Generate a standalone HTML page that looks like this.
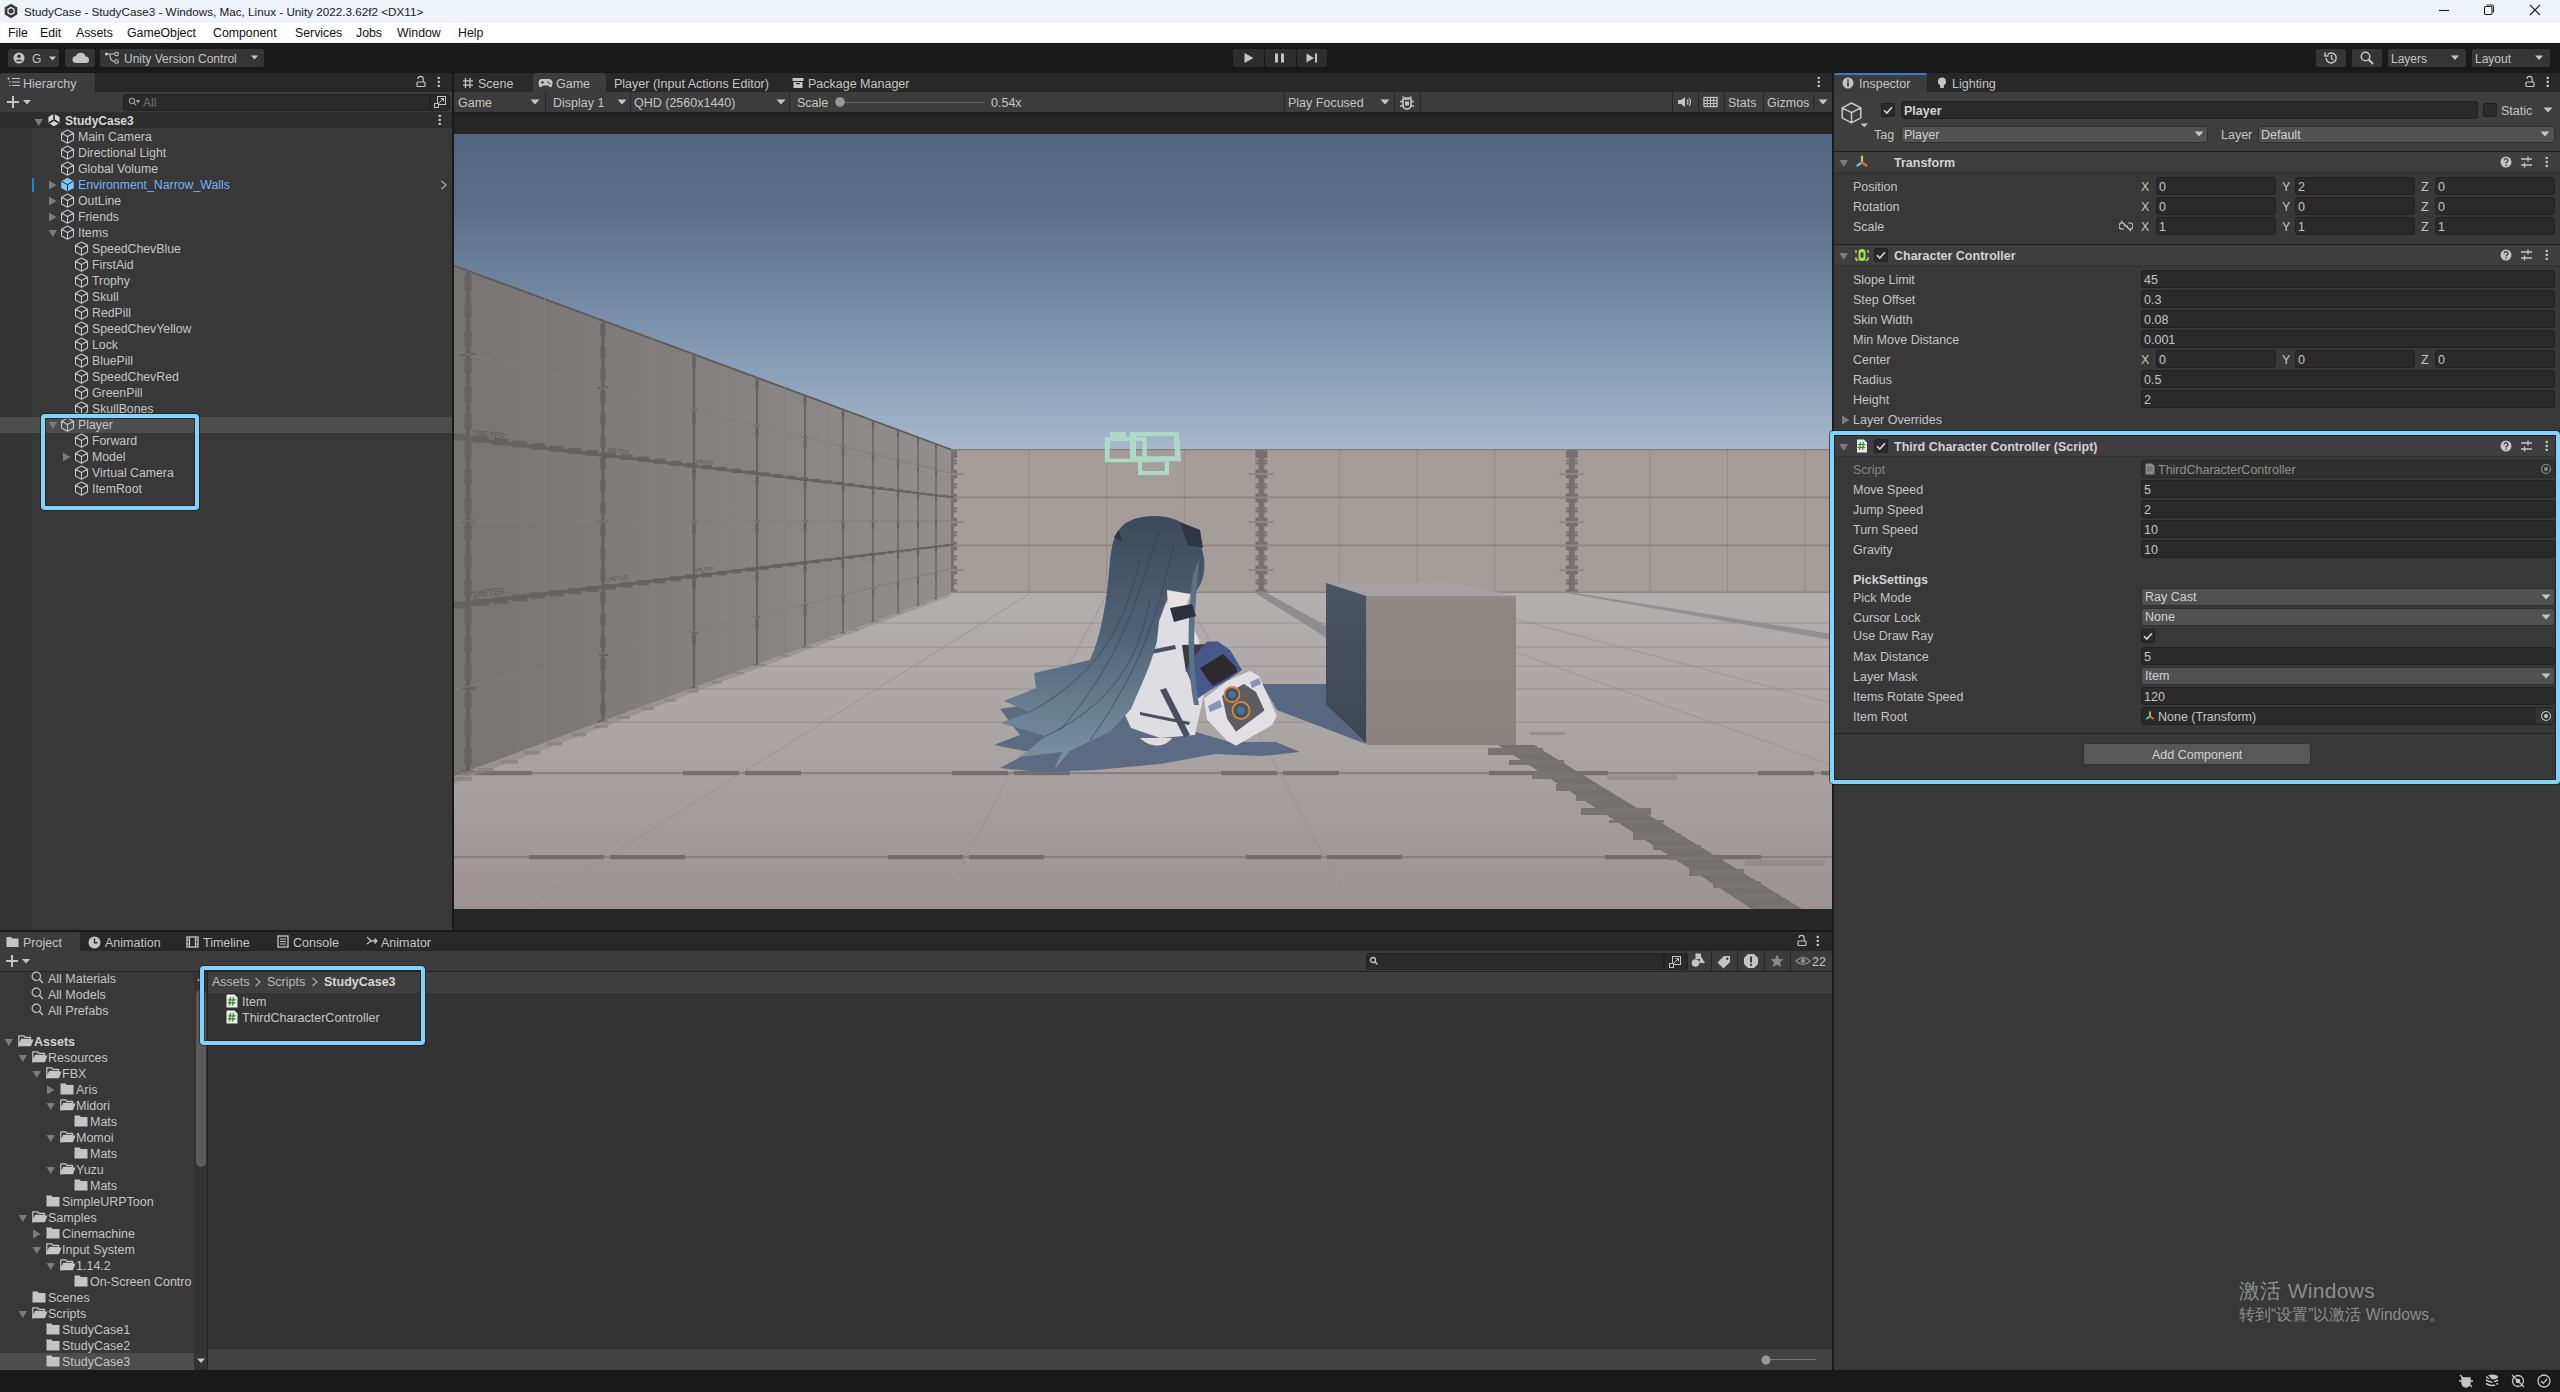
<!DOCTYPE html><html><head><meta charset="utf-8"><style>
*{margin:0;padding:0;box-sizing:border-box}
html,body{width:2560px;height:1392px;overflow:hidden;background:#191919;font-family:"Liberation Sans",sans-serif}
body>div,body>svg{position:absolute}
.t{position:absolute;line-height:16px;height:16px;white-space:nowrap;font-size:12px;color:#c4c4c4}
svg{position:absolute}
</style></head><body>
<div style="left:0px;top:0px;width:2560px;height:23px;background:#eef2f9;"></div>
<div style="left:0px;top:23px;width:2560px;height:20px;background:#ffffff;"></div>
<div style="left:0px;top:42px;width:2560px;height:1px;background:#f0f0f0;"></div>
<svg style="left:3px;top:3px" width="16" height="16" viewBox="0 0 16 16"><path d="M8 0.8 L14.3 4.4 L14.3 11.6 L8 15.2 L1.7 11.6 L1.7 4.4Z" fill="#3a3a3a"/><path d="M8 4.5 L11 6.2 L11 9.8 L8 11.5 L5 9.8 L5 6.2Z" fill="none" stroke="#eee" stroke-width="1.2"/></svg>
<div class="t" style="left:24px;top:4px;color:#1a1a1a;font-size:11.7px;">StudyCase - StudyCase3 - Windows, Mac, Linux - Unity 2022.3.62f2 &lt;DX11&gt;</div>
<svg style="left:2430px;top:2px" width="120" height="16" viewBox="0 0 120 16"><line x1="9" y1="8.5" x2="19" y2="8.5" stroke="#222" stroke-width="1.1"/><rect x="54.5" y="4.5" width="7.5" height="8" rx="1.2" fill="none" stroke="#222" stroke-width="1.1"/><path d="M56.5 3 h5 a2 2 0 0 1 2 2 v5.5" fill="none" stroke="#222" stroke-width="1.1"/><path d="M100 3 L110 13 M110 3 L100 13" stroke="#222" stroke-width="1.1"/></svg>
<div class="t" style="left:8px;top:25px;color:#111;font-size:12.3px;">File</div>
<div class="t" style="left:40px;top:25px;color:#111;font-size:12.3px;">Edit</div>
<div class="t" style="left:76px;top:25px;color:#111;font-size:12.3px;">Assets</div>
<div class="t" style="left:127px;top:25px;color:#111;font-size:12.3px;">GameObject</div>
<div class="t" style="left:213px;top:25px;color:#111;font-size:12.3px;">Component</div>
<div class="t" style="left:295px;top:25px;color:#111;font-size:12.3px;">Services</div>
<div class="t" style="left:356px;top:25px;color:#111;font-size:12.3px;">Jobs</div>
<div class="t" style="left:397px;top:25px;color:#111;font-size:12.3px;">Window</div>
<div class="t" style="left:458px;top:25px;color:#111;font-size:12.3px;">Help</div>
<div style="left:0px;top:43px;width:2560px;height:30px;background:#191919;"></div>
<div style="left:8px;top:49px;width:51px;height:18px;background:#353535;border-radius:2px"></div>
<div style="left:65px;top:49px;width:30px;height:18px;background:#353535;border-radius:2px"></div>
<div style="left:100px;top:49px;width:164px;height:18px;background:#353535;border-radius:2px"></div>
<svg style="left:12px;top:50px" width="46" height="16" viewBox="0 0 46 16"><circle cx="7" cy="8" r="5.5" fill="#c4c4c4"/><circle cx="7" cy="6.3" r="1.8" fill="#353535"/><path d="M3.6 11.2 a3.6 2.6 0 0 1 6.8 0" fill="#353535"/><path d="M37 6.5 h7 l-3.5 4z" fill="#c4c4c4"/></svg>
<div class="t" style="left:32px;top:51px;color:#c4c4c4;font-size:12px;">G</div>
<svg style="left:71px;top:51px" width="20" height="14" viewBox="0 0 20 14"><path d="M5 12 a3.5 3.5 0 0 1 0-7 a5 5 0 0 1 9.5 0.5 a3.2 3.2 0 0 1 0.5 6.5z" fill="#c4c4c4"/></svg>
<svg style="left:104px;top:50px" width="16" height="16" viewBox="0 0 16 16"><circle cx="2.5" cy="4" r="1.6" fill="#c4c4c4"/><circle cx="12.5" cy="4" r="1.8" fill="none" stroke="#c4c4c4" stroke-width="1.1"/><circle cx="12.5" cy="11.5" r="1.8" fill="none" stroke="#c4c4c4" stroke-width="1.1"/><path d="M2.5 4 H10.5 M6 4 Q6 11.5 10.5 11.5" fill="none" stroke="#c4c4c4" stroke-width="1.1"/></svg>
<div class="t" style="left:124px;top:51px;color:#c4c4c4;font-size:12px;">Unity Version Control</div>
<svg style="left:250px;top:54px" width="10" height="8"><path d="M1 1.5 h7 l-3.5 4z" fill="#c4c4c4"/></svg>
<div style="left:1233px;top:49px;width:31px;height:18px;background:#2d2d2d;border-radius:2px"></div>
<div style="left:1265px;top:49px;width:31px;height:18px;background:#2d2d2d;border-radius:2px"></div>
<div style="left:1297px;top:49px;width:30px;height:18px;background:#2d2d2d;border-radius:2px"></div>
<svg style="left:1233px;top:49px" width="95" height="18" viewBox="0 0 95 18"><path d="M11.5 4 L20.5 9 L11.5 14Z" fill="#c4c4c4"/><rect x="42" y="4.5" width="3" height="9" fill="#c4c4c4"/><rect x="48" y="4.5" width="3" height="9" fill="#c4c4c4"/><path d="M73.5 4.5 L81 9 L73.5 13.5Z" fill="#c4c4c4"/><rect x="82" y="4.5" width="2" height="9" fill="#c4c4c4"/></svg>
<div style="left:2316px;top:49px;width:30px;height:18px;background:#353535;border-radius:2px"></div>
<div style="left:2352px;top:49px;width:30px;height:18px;background:#353535;border-radius:2px"></div>
<div style="left:2388px;top:49px;width:78px;height:18px;background:#353535;border-radius:2px"></div>
<div style="left:2472px;top:49px;width:78px;height:18px;background:#353535;border-radius:2px"></div>
<svg style="left:2323px;top:50px" width="16" height="16" viewBox="0 0 16 16"><path d="M3.2 8 a5 5 0 1 0 1.5-3.6" fill="none" stroke="#c4c4c4" stroke-width="1.5"/><path d="M2 2.5 v3.5 h3.5" fill="none" stroke="#c4c4c4" stroke-width="1.5"/><path d="M8.5 5 v3.5 l2 1.5" fill="none" stroke="#c4c4c4" stroke-width="1.4"/></svg>
<svg style="left:2359px;top:50px" width="16" height="16" viewBox="0 0 16 16"><circle cx="6.5" cy="6.5" r="4.3" fill="none" stroke="#c4c4c4" stroke-width="1.5"/><path d="M9.8 9.8 L14 14" stroke="#c4c4c4" stroke-width="2"/></svg>
<div class="t" style="left:2391px;top:51px;color:#c4c4c4;font-size:12px;">Layers</div>
<div class="t" style="left:2475px;top:51px;color:#c4c4c4;font-size:12px;">Layout</div>
<svg style="left:2450px;top:54px" width="100" height="8"><path d="M1 1.5 h8 l-4 4.5z M85 1.5 h8 l-4 4.5z" fill="#c4c4c4"/></svg>
<div style="left:0px;top:73px;width:452px;height:19px;background:#282828;"></div>
<div style="left:0px;top:73px;width:95px;height:19px;background:#3c3c3c;border-radius:3px 3px 0 0"></div>
<svg style="left:7px;top:77px" width="14" height="12" viewBox="0 0 14 12"><path d="M0.5 1.5 h2 M1.5 0.5 v2 M5 1.5 H13 M5 5 H13 M5 8.5 H13 M2 5 h1.5 M2 8.5 h1.5" stroke="#c4c4c4" stroke-width="1.2"/></svg>
<div class="t" style="left:23px;top:76px;color:#c4c4c4;font-size:12.5px;">Hierarchy</div>
<svg style="left:415px;top:75px" width="12" height="13" viewBox="0 0 12 13"><rect x="2" y="7" width="8" height="4.5" rx="0.8" fill="none" stroke="#c4c4c4" stroke-width="1.2"/><path d="M8.2 7 V4 a2.6 2.6 0 0 0 -5.2 0" fill="none" stroke="#c4c4c4" stroke-width="1.2"/></svg>
<svg style="left:437px;top:76px" width="4" height="12"><rect x="0.6" y="0.8" width="2.3" height="2.3" rx="0.6" fill="#c4c4c4"/><rect x="0.6" y="4.8" width="2.3" height="2.3" rx="0.6" fill="#c4c4c4"/><rect x="0.6" y="8.8" width="2.3" height="2.3" rx="0.6" fill="#c4c4c4"/></svg>
<div style="left:0px;top:92px;width:452px;height:20px;background:#3c3c3c;"></div>
<svg style="left:6px;top:95px" width="30" height="14" viewBox="0 0 30 14"><path d="M7 1 V13 M1 7 H13" stroke="#c4c4c4" stroke-width="2"/><path d="M17 5 h8 l-4 4.5z" fill="#c4c4c4"/></svg>
<div style="left:123px;top:94px;width:307px;height:17px;background:#2a2a2a;border:1px solid #212121;border-radius:3px 0 0 3px"></div>
<svg style="left:128px;top:97px" width="12" height="10" viewBox="0 0 12 10"><circle cx="4" cy="4" r="2.6" fill="none" stroke="#9a9a9a" stroke-width="1.1"/><path d="M6 6 L8 8 M8.5 3.5 h3 l-1.5 2z" stroke="#9a9a9a" fill="#9a9a9a" stroke-width="1.1"/></svg>
<div class="t" style="left:143px;top:95px;color:#6f6f6f;font-size:12px;">All</div>
<div style="left:430px;top:94px;width:20px;height:17px;background:#2a2a2a;border:1px solid #212121;border-radius:0 3px 3px 0"></div>
<svg style="left:433px;top:95px" width="14" height="14" viewBox="0 0 14 14"><rect x="4.5" y="1.5" width="8" height="8" fill="none" stroke="#c4c4c4" stroke-width="1"/><rect x="1.5" y="8.5" width="4" height="4" fill="#2a2a2a" stroke="#c4c4c4" stroke-width="1"/><path d="M5.5 8.5 L10.5 3.5 M7.5 3.5 H10.5 V6.5" fill="none" stroke="#c4c4c4" stroke-width="1"/></svg>
<div style="left:0px;top:112px;width:452px;height:818px;background:#383838;"></div>
<div style="left:0px;top:128px;width:32px;height:802px;background:#333333;"></div>
<div style="left:0px;top:112px;width:452px;height:16px;background:#2d2d2d;"></div>
<svg style="left:34px;top:118px" width="10" height="9"><path d="M0.5 1 H9 L4.75 8z" fill="#7b7b7b"/></svg>
<svg style="left:47px;top:113px" width="14" height="14" viewBox="0 0 14 14"><path d="M7 0.8 L12.6 4 V10 L7 13.2 L1.4 10 V4Z" fill="#d8d8d8"/><path d="M7 0.8 V7 L1.6 10.2 M7 7 L12.4 10.2" stroke="#2d2d2d" stroke-width="1.7" fill="none"/><path d="M7 8.5 V13" stroke="#d8d8d8" stroke-width="1.6"/></svg>
<div class="t" style="left:65px;top:113px;color:#d6d6d6;font-size:12px;font-weight:bold">StudyCase3</div>
<svg style="left:438px;top:114px" width="4" height="12"><rect x="0.6" y="0.8" width="2.3" height="2.3" rx="0.6" fill="#c4c4c4"/><rect x="0.6" y="4.8" width="2.3" height="2.3" rx="0.6" fill="#c4c4c4"/><rect x="0.6" y="8.8" width="2.3" height="2.3" rx="0.6" fill="#c4c4c4"/></svg>
<div style="left:0px;top:417px;width:452px;height:16px;background:#4d4d4d;"></div>
<svg style="left:60px;top:129px" width="15" height="15" viewBox="0 0 15 15"><path d="M7.5 1 L13.5 4.3 L13.5 10.9 L7.5 14.2 L1.5 10.9 L1.5 4.3Z M1.5 4.3 L7.5 7.6 L13.5 4.3 M7.5 7.6 V14.2" fill="none" stroke="#c4c4c4" stroke-width="1.1" stroke-linejoin="round"/></svg>
<div class="t" style="left:78px;top:129px;color:#c4c4c4;font-size:12.3px;">Main Camera</div>
<svg style="left:60px;top:145px" width="15" height="15" viewBox="0 0 15 15"><path d="M7.5 1 L13.5 4.3 L13.5 10.9 L7.5 14.2 L1.5 10.9 L1.5 4.3Z M1.5 4.3 L7.5 7.6 L13.5 4.3 M7.5 7.6 V14.2" fill="none" stroke="#c4c4c4" stroke-width="1.1" stroke-linejoin="round"/></svg>
<div class="t" style="left:78px;top:145px;color:#c4c4c4;font-size:12.3px;">Directional Light</div>
<svg style="left:60px;top:161px" width="15" height="15" viewBox="0 0 15 15"><path d="M7.5 1 L13.5 4.3 L13.5 10.9 L7.5 14.2 L1.5 10.9 L1.5 4.3Z M1.5 4.3 L7.5 7.6 L13.5 4.3 M7.5 7.6 V14.2" fill="none" stroke="#c4c4c4" stroke-width="1.1" stroke-linejoin="round"/></svg>
<div class="t" style="left:78px;top:161px;color:#c4c4c4;font-size:12.3px;">Global Volume</div>
<svg style="left:48px;top:180px" width="9" height="10"><path d="M1 0.5 V9.5 L8.5 5z" fill="#7b7b7b"/></svg>
<svg style="left:60px;top:177px" width="15" height="15" viewBox="0 0 15 15"><path d="M7.5 0.8 L13.8 4.2 L13.8 11 L7.5 14.4 L1.2 11 L1.2 4.2Z" fill="#7cc7f5"/><path d="M1.5 4.3 L7.5 7.6 L13.5 4.3 M7.5 7.6 V14" fill="none" stroke="#2b2b2b" stroke-width="1"/></svg>
<div class="t" style="left:78px;top:177px;color:#7bb0f2;font-size:12.3px;">Environment_Narrow_Walls</div>
<svg style="left:48px;top:196px" width="9" height="10"><path d="M1 0.5 V9.5 L8.5 5z" fill="#7b7b7b"/></svg>
<svg style="left:60px;top:193px" width="15" height="15" viewBox="0 0 15 15"><path d="M7.5 1 L13.5 4.3 L13.5 10.9 L7.5 14.2 L1.5 10.9 L1.5 4.3Z M1.5 4.3 L7.5 7.6 L13.5 4.3 M7.5 7.6 V14.2" fill="none" stroke="#c4c4c4" stroke-width="1.1" stroke-linejoin="round"/></svg>
<div class="t" style="left:78px;top:193px;color:#c4c4c4;font-size:12.3px;">OutLine</div>
<svg style="left:48px;top:212px" width="9" height="10"><path d="M1 0.5 V9.5 L8.5 5z" fill="#7b7b7b"/></svg>
<svg style="left:60px;top:209px" width="15" height="15" viewBox="0 0 15 15"><path d="M7.5 1 L13.5 4.3 L13.5 10.9 L7.5 14.2 L1.5 10.9 L1.5 4.3Z M1.5 4.3 L7.5 7.6 L13.5 4.3 M7.5 7.6 V14.2" fill="none" stroke="#c4c4c4" stroke-width="1.1" stroke-linejoin="round"/></svg>
<div class="t" style="left:78px;top:209px;color:#c4c4c4;font-size:12.3px;">Friends</div>
<svg style="left:48px;top:229px" width="10" height="9"><path d="M0.5 1 H9 L4.75 8z" fill="#7b7b7b"/></svg>
<svg style="left:60px;top:225px" width="15" height="15" viewBox="0 0 15 15"><path d="M7.5 1 L13.5 4.3 L13.5 10.9 L7.5 14.2 L1.5 10.9 L1.5 4.3Z M1.5 4.3 L7.5 7.6 L13.5 4.3 M7.5 7.6 V14.2" fill="none" stroke="#c4c4c4" stroke-width="1.1" stroke-linejoin="round"/></svg>
<div class="t" style="left:78px;top:225px;color:#c4c4c4;font-size:12.3px;">Items</div>
<svg style="left:74px;top:241px" width="15" height="15" viewBox="0 0 15 15"><path d="M7.5 1 L13.5 4.3 L13.5 10.9 L7.5 14.2 L1.5 10.9 L1.5 4.3Z M1.5 4.3 L7.5 7.6 L13.5 4.3 M7.5 7.6 V14.2" fill="none" stroke="#c4c4c4" stroke-width="1.1" stroke-linejoin="round"/></svg>
<div class="t" style="left:92px;top:241px;color:#c4c4c4;font-size:12.3px;">SpeedChevBlue</div>
<svg style="left:74px;top:257px" width="15" height="15" viewBox="0 0 15 15"><path d="M7.5 1 L13.5 4.3 L13.5 10.9 L7.5 14.2 L1.5 10.9 L1.5 4.3Z M1.5 4.3 L7.5 7.6 L13.5 4.3 M7.5 7.6 V14.2" fill="none" stroke="#c4c4c4" stroke-width="1.1" stroke-linejoin="round"/></svg>
<div class="t" style="left:92px;top:257px;color:#c4c4c4;font-size:12.3px;">FirstAid</div>
<svg style="left:74px;top:273px" width="15" height="15" viewBox="0 0 15 15"><path d="M7.5 1 L13.5 4.3 L13.5 10.9 L7.5 14.2 L1.5 10.9 L1.5 4.3Z M1.5 4.3 L7.5 7.6 L13.5 4.3 M7.5 7.6 V14.2" fill="none" stroke="#c4c4c4" stroke-width="1.1" stroke-linejoin="round"/></svg>
<div class="t" style="left:92px;top:273px;color:#c4c4c4;font-size:12.3px;">Trophy</div>
<svg style="left:74px;top:289px" width="15" height="15" viewBox="0 0 15 15"><path d="M7.5 1 L13.5 4.3 L13.5 10.9 L7.5 14.2 L1.5 10.9 L1.5 4.3Z M1.5 4.3 L7.5 7.6 L13.5 4.3 M7.5 7.6 V14.2" fill="none" stroke="#c4c4c4" stroke-width="1.1" stroke-linejoin="round"/></svg>
<div class="t" style="left:92px;top:289px;color:#c4c4c4;font-size:12.3px;">Skull</div>
<svg style="left:74px;top:305px" width="15" height="15" viewBox="0 0 15 15"><path d="M7.5 1 L13.5 4.3 L13.5 10.9 L7.5 14.2 L1.5 10.9 L1.5 4.3Z M1.5 4.3 L7.5 7.6 L13.5 4.3 M7.5 7.6 V14.2" fill="none" stroke="#c4c4c4" stroke-width="1.1" stroke-linejoin="round"/></svg>
<div class="t" style="left:92px;top:305px;color:#c4c4c4;font-size:12.3px;">RedPill</div>
<svg style="left:74px;top:321px" width="15" height="15" viewBox="0 0 15 15"><path d="M7.5 1 L13.5 4.3 L13.5 10.9 L7.5 14.2 L1.5 10.9 L1.5 4.3Z M1.5 4.3 L7.5 7.6 L13.5 4.3 M7.5 7.6 V14.2" fill="none" stroke="#c4c4c4" stroke-width="1.1" stroke-linejoin="round"/></svg>
<div class="t" style="left:92px;top:321px;color:#c4c4c4;font-size:12.3px;">SpeedChevYellow</div>
<svg style="left:74px;top:337px" width="15" height="15" viewBox="0 0 15 15"><path d="M7.5 1 L13.5 4.3 L13.5 10.9 L7.5 14.2 L1.5 10.9 L1.5 4.3Z M1.5 4.3 L7.5 7.6 L13.5 4.3 M7.5 7.6 V14.2" fill="none" stroke="#c4c4c4" stroke-width="1.1" stroke-linejoin="round"/></svg>
<div class="t" style="left:92px;top:337px;color:#c4c4c4;font-size:12.3px;">Lock</div>
<svg style="left:74px;top:353px" width="15" height="15" viewBox="0 0 15 15"><path d="M7.5 1 L13.5 4.3 L13.5 10.9 L7.5 14.2 L1.5 10.9 L1.5 4.3Z M1.5 4.3 L7.5 7.6 L13.5 4.3 M7.5 7.6 V14.2" fill="none" stroke="#c4c4c4" stroke-width="1.1" stroke-linejoin="round"/></svg>
<div class="t" style="left:92px;top:353px;color:#c4c4c4;font-size:12.3px;">BluePill</div>
<svg style="left:74px;top:369px" width="15" height="15" viewBox="0 0 15 15"><path d="M7.5 1 L13.5 4.3 L13.5 10.9 L7.5 14.2 L1.5 10.9 L1.5 4.3Z M1.5 4.3 L7.5 7.6 L13.5 4.3 M7.5 7.6 V14.2" fill="none" stroke="#c4c4c4" stroke-width="1.1" stroke-linejoin="round"/></svg>
<div class="t" style="left:92px;top:369px;color:#c4c4c4;font-size:12.3px;">SpeedChevRed</div>
<svg style="left:74px;top:385px" width="15" height="15" viewBox="0 0 15 15"><path d="M7.5 1 L13.5 4.3 L13.5 10.9 L7.5 14.2 L1.5 10.9 L1.5 4.3Z M1.5 4.3 L7.5 7.6 L13.5 4.3 M7.5 7.6 V14.2" fill="none" stroke="#c4c4c4" stroke-width="1.1" stroke-linejoin="round"/></svg>
<div class="t" style="left:92px;top:385px;color:#c4c4c4;font-size:12.3px;">GreenPill</div>
<svg style="left:74px;top:401px" width="15" height="15" viewBox="0 0 15 15"><path d="M7.5 1 L13.5 4.3 L13.5 10.9 L7.5 14.2 L1.5 10.9 L1.5 4.3Z M1.5 4.3 L7.5 7.6 L13.5 4.3 M7.5 7.6 V14.2" fill="none" stroke="#c4c4c4" stroke-width="1.1" stroke-linejoin="round"/></svg>
<div class="t" style="left:92px;top:401px;color:#c4c4c4;font-size:12.3px;">SkullBones</div>
<svg style="left:48px;top:421px" width="10" height="9"><path d="M0.5 1 H9 L4.75 8z" fill="#7b7b7b"/></svg>
<svg style="left:60px;top:417px" width="15" height="15" viewBox="0 0 15 15"><path d="M7.5 1 L13.5 4.3 L13.5 10.9 L7.5 14.2 L1.5 10.9 L1.5 4.3Z M1.5 4.3 L7.5 7.6 L13.5 4.3 M7.5 7.6 V14.2" fill="none" stroke="#c4c4c4" stroke-width="1.1" stroke-linejoin="round"/></svg>
<div class="t" style="left:78px;top:417px;color:#c4c4c4;font-size:12.3px;">Player</div>
<svg style="left:74px;top:433px" width="15" height="15" viewBox="0 0 15 15"><path d="M7.5 1 L13.5 4.3 L13.5 10.9 L7.5 14.2 L1.5 10.9 L1.5 4.3Z M1.5 4.3 L7.5 7.6 L13.5 4.3 M7.5 7.6 V14.2" fill="none" stroke="#c4c4c4" stroke-width="1.1" stroke-linejoin="round"/></svg>
<div class="t" style="left:92px;top:433px;color:#c4c4c4;font-size:12.3px;">Forward</div>
<svg style="left:62px;top:452px" width="9" height="10"><path d="M1 0.5 V9.5 L8.5 5z" fill="#7b7b7b"/></svg>
<svg style="left:74px;top:449px" width="15" height="15" viewBox="0 0 15 15"><path d="M7.5 1 L13.5 4.3 L13.5 10.9 L7.5 14.2 L1.5 10.9 L1.5 4.3Z M1.5 4.3 L7.5 7.6 L13.5 4.3 M7.5 7.6 V14.2" fill="none" stroke="#c4c4c4" stroke-width="1.1" stroke-linejoin="round"/></svg>
<div class="t" style="left:92px;top:449px;color:#c4c4c4;font-size:12.3px;">Model</div>
<svg style="left:74px;top:465px" width="15" height="15" viewBox="0 0 15 15"><path d="M7.5 1 L13.5 4.3 L13.5 10.9 L7.5 14.2 L1.5 10.9 L1.5 4.3Z M1.5 4.3 L7.5 7.6 L13.5 4.3 M7.5 7.6 V14.2" fill="none" stroke="#c4c4c4" stroke-width="1.1" stroke-linejoin="round"/></svg>
<div class="t" style="left:92px;top:465px;color:#c4c4c4;font-size:12.3px;">Virtual Camera</div>
<svg style="left:74px;top:481px" width="15" height="15" viewBox="0 0 15 15"><path d="M7.5 1 L13.5 4.3 L13.5 10.9 L7.5 14.2 L1.5 10.9 L1.5 4.3Z M1.5 4.3 L7.5 7.6 L13.5 4.3 M7.5 7.6 V14.2" fill="none" stroke="#c4c4c4" stroke-width="1.1" stroke-linejoin="round"/></svg>
<div class="t" style="left:92px;top:481px;color:#c4c4c4;font-size:12.3px;">ItemRoot</div>
<div style="left:32px;top:178px;width:2px;height:14px;background:#0a8ad6;"></div>
<svg style="left:440px;top:180px" width="8" height="10"><path d="M1.5 1 L6 5 L1.5 9" fill="none" stroke="#a8a8a8" stroke-width="1.3"/></svg>
<div style="left:41px;top:414px;width:158px;height:96px;background:transparent;border:4px solid #80d4fa;border-radius:4px;box-shadow:0 0 0 1px rgba(40,30,25,0.7), inset 0 0 0 1px rgba(40,30,25,0.7)"></div>
<div style="left:454px;top:73px;width:1378px;height:19px;background:#282828;"></div>
<div style="left:454px;top:73px;width:79px;height:19px;background:#2a2a2a;border-radius:3px 3px 0 0"></div>
<div style="left:533px;top:73px;width:73px;height:19px;background:#3c3c3c;border-radius:3px 3px 0 0"></div>
<svg style="left:462px;top:77px" width="12" height="12" viewBox="0 0 12 12"><path d="M3.5 1 V11 M8 1 V11 M1 3.8 H11 M1 8.2 H11" stroke="#c4c4c4" stroke-width="1.3"/></svg>
<div class="t" style="left:478px;top:76px;color:#c4c4c4;font-size:12.5px;">Scene</div>
<svg style="left:538px;top:78px" width="15" height="10" viewBox="0 0 15 10"><path d="M4 1 H11 a3.5 3.5 0 0 1 3.5 4 L14 8 a1.5 1.5 0 0 1-2.5 0.8 L10 7.5 H5 L3.5 8.8 A1.5 1.5 0 0 1 1 8 L0.5 5 A3.5 3.5 0 0 1 4 1z" fill="#c4c4c4"/><path d="M3 4.5 h3 M4.5 3 v3" stroke="#3c3c3c" stroke-width="1"/><circle cx="10" cy="4" r="0.8" fill="#3c3c3c"/><circle cx="11.5" cy="5.5" r="0.8" fill="#3c3c3c"/></svg>
<div class="t" style="left:556px;top:76px;color:#c4c4c4;font-size:12.5px;">Game</div>
<div class="t" style="left:614px;top:76px;color:#c4c4c4;font-size:12.5px;">Player (Input Actions Editor)</div>
<svg style="left:792px;top:77px" width="12" height="12" viewBox="0 0 12 12"><rect x="0.5" y="1" width="11" height="3" fill="#c4c4c4"/><path d="M1.5 5 H10.5 V11 H1.5z" fill="#c4c4c4"/><rect x="4" y="6" width="4" height="1.2" fill="#282828"/></svg>
<div class="t" style="left:808px;top:76px;color:#c4c4c4;font-size:12.5px;">Package Manager</div>
<svg style="left:1817px;top:76px" width="4" height="12"><rect x="0.6" y="0.8" width="2.3" height="2.3" rx="0.6" fill="#c4c4c4"/><rect x="0.6" y="4.8" width="2.3" height="2.3" rx="0.6" fill="#c4c4c4"/><rect x="0.6" y="8.8" width="2.3" height="2.3" rx="0.6" fill="#c4c4c4"/></svg>
<div style="left:454px;top:92px;width:1378px;height:20px;background:#3c3c3c;"></div>
<div style="left:545px;top:92px;width:1px;height:20px;background:#262626;"></div>
<div style="left:630px;top:92px;width:1px;height:20px;background:#262626;"></div>
<div style="left:789px;top:92px;width:1px;height:20px;background:#262626;"></div>
<div style="left:1284px;top:92px;width:1px;height:20px;background:#262626;"></div>
<div style="left:1394px;top:92px;width:1px;height:20px;background:#262626;"></div>
<div style="left:1420px;top:92px;width:1px;height:20px;background:#262626;"></div>
<div style="left:1672px;top:92px;width:1px;height:20px;background:#262626;"></div>
<div style="left:1698px;top:92px;width:1px;height:20px;background:#262626;"></div>
<div style="left:1724px;top:92px;width:1px;height:20px;background:#262626;"></div>
<div style="left:1763px;top:92px;width:1px;height:20px;background:#262626;"></div>
<div class="t" style="left:458px;top:95px;color:#c4c4c4;font-size:12.5px;">Game</div>
<svg style="left:530px;top:99px" width="10" height="7"><path d="M0.5 0.5 H9.5 L5 5.5z" fill="#c4c4c4"/></svg>
<div class="t" style="left:553px;top:95px;color:#c4c4c4;font-size:12.5px;">Display 1</div>
<svg style="left:617px;top:99px" width="10" height="7"><path d="M0.5 0.5 H9.5 L5 5.5z" fill="#c4c4c4"/></svg>
<div class="t" style="left:634px;top:95px;color:#c4c4c4;font-size:12.5px;">QHD (2560x1440)</div>
<svg style="left:776px;top:99px" width="10" height="7"><path d="M0.5 0.5 H9.5 L5 5.5z" fill="#c4c4c4"/></svg>
<div class="t" style="left:797px;top:95px;color:#c4c4c4;font-size:12.5px;">Scale</div>
<div style="left:840px;top:102px;width:145px;height:1px;background:#666666;"></div>
<svg style="left:834px;top:96px" width="12" height="12"><circle cx="6" cy="6" r="4.8" fill="#999999"/></svg>
<div class="t" style="left:991px;top:95px;color:#c4c4c4;font-size:12.5px;">0.54x</div>
<div class="t" style="left:1288px;top:95px;color:#c4c4c4;font-size:12.5px;">Play Focused</div>
<svg style="left:1380px;top:99px" width="10" height="7"><path d="M0.5 0.5 H9.5 L5 5.5z" fill="#c4c4c4"/></svg>
<svg style="left:1399px;top:95px" width="16" height="15" viewBox="0 0 16 15"><path d="M5 3 L3.5 1 M11 3 L12.5 1" stroke="#c4c4c4" stroke-width="1.1"/><path d="M4 4 H12 V10 a4 4 0 0 1-8 0z" fill="none" stroke="#c4c4c4" stroke-width="1.6"/><rect x="6" y="6.5" width="4" height="4" fill="#c4c4c4"/><path d="M1 6.5 H4 M12 6.5 H15 M1 11 H4 M12 11 H15 M5 3 H11" stroke="#c4c4c4" stroke-width="1.3"/></svg>
<svg style="left:1677px;top:96px" width="16" height="12" viewBox="0 0 16 12"><path d="M1 4 H4 L8 1 V11 L4 8 H1z" fill="#c4c4c4"/><path d="M10 3.5 Q12 6 10 8.5 M12 2 Q15 6 12 10" fill="none" stroke="#c4c4c4" stroke-width="1.2"/></svg>
<svg style="left:1703px;top:96px" width="16" height="12" viewBox="0 0 16 12"><rect x="1" y="1.5" width="13" height="9" fill="none" stroke="#c4c4c4" stroke-width="1.3"/><path d="M1 4.5 H14 M1 7.5 H14 M4.3 1.5 V10.5 M7.5 1.5 V10.5 M10.7 1.5 V10.5" stroke="#c4c4c4" stroke-width="1"/></svg>
<div class="t" style="left:1728px;top:95px;color:#c4c4c4;font-size:12.5px;">Stats</div>
<div class="t" style="left:1767px;top:95px;color:#c4c4c4;font-size:12.5px;">Gizmos</div>
<div style="left:1813px;top:95px;width:1px;height:14px;background:#262626;"></div>
<svg style="left:1818px;top:99px" width="10" height="7"><path d="M0.5 0.5 H9.5 L5 5.5z" fill="#c4c4c4"/></svg>
<div style="left:454px;top:112px;width:1378px;height:818px;background:#262626;"></div>
<div style="left:454px;top:112px;width:1378px;height:6px;background:linear-gradient(#1c1c1c,#262626);"></div>
<svg style="left:454px;top:134px" width="1378" height="775" viewBox="454 134 1378 775"><defs><linearGradient id="sky" x1="0" y1="134" x2="0" y2="452" gradientUnits="userSpaceOnUse"><stop offset="0" stop-color="#516582"/><stop offset="0.25" stop-color="#5c708e"/><stop offset="0.49" stop-color="#7186a1"/><stop offset="0.75" stop-color="#8ba0b9"/><stop offset="1" stop-color="#a6b9cc"/></linearGradient><linearGradient id="lw" x1="454" y1="0" x2="951" y2="0" gradientUnits="userSpaceOnUse"><stop offset="0" stop-color="#777372"/><stop offset="0.6" stop-color="#878382"/><stop offset="1" stop-color="#938f8e"/></linearGradient><linearGradient id="fl" x1="0" y1="593" x2="0" y2="909" gradientUnits="userSpaceOnUse"><stop offset="0" stop-color="#b4afaf"/><stop offset="0.5" stop-color="#a9a3a2"/><stop offset="1" stop-color="#9b9492"/></linearGradient><linearGradient id="hair" x1="0" y1="516" x2="0" y2="770" gradientUnits="userSpaceOnUse"><stop offset="0" stop-color="#3d495b"/><stop offset="0.45" stop-color="#4f6275"/><stop offset="1" stop-color="#7b95a5"/></linearGradient><linearGradient id="cl" x1="0" y1="583" x2="0" y2="744" gradientUnits="userSpaceOnUse"><stop offset="0" stop-color="#4c5563"/><stop offset="1" stop-color="#3e4552"/></linearGradient><linearGradient id="cf" x1="0" y1="596" x2="0" y2="745" gradientUnits="userSpaceOnUse"><stop offset="0" stop-color="#908885"/><stop offset="1" stop-color="#8a827f"/></linearGradient></defs><rect x="454" y="134" width="1378" height="775" fill="url(#fl)"/><rect x="454" y="134" width="1378" height="318" fill="url(#sky)"/><rect x="951" y="449" width="881" height="144" fill="#a59d9a"/><rect x="948.0" y="449" width="6" height="144" fill="#777271"/><rect x="945.0" y="449.0" width="12" height="9.0" fill="#777271"/><rect x="945.0" y="459.5" width="12" height="2" fill="#777271"/><rect x="945.0" y="462.5" width="12" height="2" fill="#777271"/><rect x="945.0" y="469.5" width="12" height="9.0" fill="#777271"/><rect x="945.0" y="483.5" width="12" height="2" fill="#777271"/><rect x="945.0" y="486.5" width="12" height="2" fill="#777271"/><rect x="938.5" y="473.0" width="25" height="2" fill="#8e8988"/><rect x="945.0" y="493.5" width="12" height="9.0" fill="#777271"/><rect x="945.0" y="507.5" width="12" height="2" fill="#777271"/><rect x="945.0" y="510.5" width="12" height="2" fill="#777271"/><rect x="945.0" y="517.5" width="12" height="9.0" fill="#777271"/><rect x="945.0" y="531.5" width="12" height="2" fill="#777271"/><rect x="945.0" y="534.5" width="12" height="2" fill="#777271"/><rect x="938.5" y="521.0" width="25" height="2" fill="#8e8988"/><rect x="945.0" y="541.5" width="12" height="9.0" fill="#777271"/><rect x="945.0" y="555.5" width="12" height="2" fill="#777271"/><rect x="945.0" y="558.5" width="12" height="2" fill="#777271"/><rect x="945.0" y="565.5" width="12" height="9.0" fill="#777271"/><rect x="945.0" y="579.5" width="12" height="2" fill="#777271"/><rect x="945.0" y="582.5" width="12" height="2" fill="#777271"/><rect x="938.5" y="569.0" width="25" height="2" fill="#8e8988"/><rect x="945.0" y="589.5" width="12" height="3.5" fill="#777271"/><rect x="1028.6" y="449" width="1" height="144" fill="#948d8a"/><rect x="1106.2" y="449" width="1" height="144" fill="#948d8a"/><rect x="1183.8" y="449" width="1" height="144" fill="#948d8a"/><rect x="1258.4" y="449" width="6" height="144" fill="#777271"/><rect x="1255.4" y="449.0" width="12" height="9.0" fill="#777271"/><rect x="1255.4" y="459.5" width="12" height="2" fill="#777271"/><rect x="1255.4" y="462.5" width="12" height="2" fill="#777271"/><rect x="1255.4" y="469.5" width="12" height="9.0" fill="#777271"/><rect x="1255.4" y="483.5" width="12" height="2" fill="#777271"/><rect x="1255.4" y="486.5" width="12" height="2" fill="#777271"/><rect x="1248.9" y="473.0" width="25" height="2" fill="#8e8988"/><rect x="1255.4" y="493.5" width="12" height="9.0" fill="#777271"/><rect x="1255.4" y="507.5" width="12" height="2" fill="#777271"/><rect x="1255.4" y="510.5" width="12" height="2" fill="#777271"/><rect x="1255.4" y="517.5" width="12" height="9.0" fill="#777271"/><rect x="1255.4" y="531.5" width="12" height="2" fill="#777271"/><rect x="1255.4" y="534.5" width="12" height="2" fill="#777271"/><rect x="1248.9" y="521.0" width="25" height="2" fill="#8e8988"/><rect x="1255.4" y="541.5" width="12" height="9.0" fill="#777271"/><rect x="1255.4" y="555.5" width="12" height="2" fill="#777271"/><rect x="1255.4" y="558.5" width="12" height="2" fill="#777271"/><rect x="1255.4" y="565.5" width="12" height="9.0" fill="#777271"/><rect x="1255.4" y="579.5" width="12" height="2" fill="#777271"/><rect x="1255.4" y="582.5" width="12" height="2" fill="#777271"/><rect x="1248.9" y="569.0" width="25" height="2" fill="#8e8988"/><rect x="1255.4" y="589.5" width="12" height="3.5" fill="#777271"/><rect x="1339.0" y="449" width="1" height="144" fill="#948d8a"/><rect x="1416.6" y="449" width="1" height="144" fill="#948d8a"/><rect x="1494.2" y="449" width="1" height="144" fill="#948d8a"/><rect x="1568.8" y="449" width="6" height="144" fill="#777271"/><rect x="1565.8" y="449.0" width="12" height="9.0" fill="#777271"/><rect x="1565.8" y="459.5" width="12" height="2" fill="#777271"/><rect x="1565.8" y="462.5" width="12" height="2" fill="#777271"/><rect x="1565.8" y="469.5" width="12" height="9.0" fill="#777271"/><rect x="1565.8" y="483.5" width="12" height="2" fill="#777271"/><rect x="1565.8" y="486.5" width="12" height="2" fill="#777271"/><rect x="1559.3" y="473.0" width="25" height="2" fill="#8e8988"/><rect x="1565.8" y="493.5" width="12" height="9.0" fill="#777271"/><rect x="1565.8" y="507.5" width="12" height="2" fill="#777271"/><rect x="1565.8" y="510.5" width="12" height="2" fill="#777271"/><rect x="1565.8" y="517.5" width="12" height="9.0" fill="#777271"/><rect x="1565.8" y="531.5" width="12" height="2" fill="#777271"/><rect x="1565.8" y="534.5" width="12" height="2" fill="#777271"/><rect x="1559.3" y="521.0" width="25" height="2" fill="#8e8988"/><rect x="1565.8" y="541.5" width="12" height="9.0" fill="#777271"/><rect x="1565.8" y="555.5" width="12" height="2" fill="#777271"/><rect x="1565.8" y="558.5" width="12" height="2" fill="#777271"/><rect x="1565.8" y="565.5" width="12" height="9.0" fill="#777271"/><rect x="1565.8" y="579.5" width="12" height="2" fill="#777271"/><rect x="1565.8" y="582.5" width="12" height="2" fill="#777271"/><rect x="1559.3" y="569.0" width="25" height="2" fill="#8e8988"/><rect x="1565.8" y="589.5" width="12" height="3.5" fill="#777271"/><rect x="1649.4" y="449" width="1" height="144" fill="#948d8a"/><rect x="1727.0" y="449" width="1" height="144" fill="#948d8a"/><rect x="1804.6" y="449" width="1" height="144" fill="#948d8a"/><rect x="951" y="496.5" width="881" height="2" fill="#8e8885"/><rect x="951" y="544.5" width="881" height="2" fill="#8e8885"/><rect x="951" y="449" width="881" height="1.2" fill="#847c7a"/><rect x="951" y="591.5" width="881" height="1.5" fill="#8d8583"/><polygon points="454,265 951,449 951,593 454,776" fill="url(#lw)"/><polyline points="454,265.5 951,449.5" fill="none" stroke="#5f5b5b" stroke-width="1.8"/><rect x="465.8" y="270.2" width="4.5" height="500.7" fill="#666262"/><rect x="464.4" y="275.2" width="7.2" height="15.0" fill="#666262"/><rect x="464.4" y="303.0" width="7.2" height="15.0" fill="#666262"/><rect x="464.4" y="330.8" width="7.2" height="15.0" fill="#666262"/><rect x="464.4" y="358.6" width="7.2" height="15.0" fill="#666262"/><rect x="464.4" y="386.4" width="7.2" height="15.0" fill="#666262"/><rect x="464.4" y="414.3" width="7.2" height="15.0" fill="#666262"/><rect x="464.4" y="442.1" width="7.2" height="15.0" fill="#666262"/><rect x="464.4" y="469.9" width="7.2" height="15.0" fill="#666262"/><rect x="464.4" y="497.7" width="7.2" height="15.0" fill="#666262"/><rect x="464.4" y="525.5" width="7.2" height="15.0" fill="#666262"/><rect x="464.4" y="553.3" width="7.2" height="15.0" fill="#666262"/><rect x="464.4" y="581.1" width="7.2" height="15.0" fill="#666262"/><rect x="464.4" y="609.0" width="7.2" height="15.0" fill="#666262"/><rect x="464.4" y="636.8" width="7.2" height="15.0" fill="#666262"/><rect x="464.4" y="664.6" width="7.2" height="15.0" fill="#666262"/><rect x="464.4" y="692.4" width="7.2" height="15.0" fill="#666262"/><rect x="464.4" y="720.2" width="7.2" height="15.0" fill="#666262"/><rect x="464.4" y="748.0" width="7.2" height="15.0" fill="#666262"/><rect x="460.8" y="352.8" width="14.4" height="3.0" fill="#666262"/><rect x="460.8" y="436.2" width="14.4" height="3.0" fill="#666262"/><rect x="460.8" y="519.7" width="14.4" height="3.0" fill="#666262"/><rect x="460.8" y="603.1" width="14.4" height="3.0" fill="#666262"/><rect x="460.8" y="686.6" width="14.4" height="3.0" fill="#666262"/><rect x="460.8" y="770.0" width="14.4" height="3.0" fill="#666262"/><rect x="601.4" y="320.1" width="3.2" height="401.0" fill="#666262"/><rect x="600.4" y="324.1" width="5.1" height="12.0" fill="#666262"/><rect x="600.4" y="346.4" width="5.1" height="12.0" fill="#666262"/><rect x="600.4" y="368.7" width="5.1" height="12.0" fill="#666262"/><rect x="600.4" y="391.0" width="5.1" height="12.0" fill="#666262"/><rect x="600.4" y="413.2" width="5.1" height="12.0" fill="#666262"/><rect x="600.4" y="435.5" width="5.1" height="12.0" fill="#666262"/><rect x="600.4" y="457.8" width="5.1" height="12.0" fill="#666262"/><rect x="600.4" y="480.1" width="5.1" height="12.0" fill="#666262"/><rect x="600.4" y="502.3" width="5.1" height="12.0" fill="#666262"/><rect x="600.4" y="524.6" width="5.1" height="12.0" fill="#666262"/><rect x="600.4" y="546.9" width="5.1" height="12.0" fill="#666262"/><rect x="600.4" y="569.2" width="5.1" height="12.0" fill="#666262"/><rect x="600.4" y="591.4" width="5.1" height="12.0" fill="#666262"/><rect x="600.4" y="613.7" width="5.1" height="12.0" fill="#666262"/><rect x="600.4" y="636.0" width="5.1" height="12.0" fill="#666262"/><rect x="600.4" y="658.3" width="5.1" height="12.0" fill="#666262"/><rect x="600.4" y="680.6" width="5.1" height="12.0" fill="#666262"/><rect x="600.4" y="702.8" width="5.1" height="12.0" fill="#666262"/><rect x="597.9" y="386.3" width="10.2" height="2.4" fill="#666262"/><rect x="597.9" y="453.1" width="10.2" height="2.4" fill="#666262"/><rect x="597.9" y="519.9" width="10.2" height="2.4" fill="#666262"/><rect x="597.9" y="586.8" width="10.2" height="2.4" fill="#666262"/><rect x="597.9" y="653.6" width="10.2" height="2.4" fill="#666262"/><rect x="597.9" y="720.4" width="10.2" height="2.4" fill="#666262"/><rect x="692.8" y="353.8" width="2.4" height="333.8" fill="#666262"/><rect x="692.1" y="357.1" width="3.8" height="10.0" fill="#666262"/><rect x="692.1" y="412.8" width="3.8" height="10.0" fill="#666262"/><rect x="692.1" y="468.4" width="3.8" height="10.0" fill="#666262"/><rect x="692.1" y="524.0" width="3.8" height="10.0" fill="#666262"/><rect x="692.1" y="579.6" width="3.8" height="10.0" fill="#666262"/><rect x="692.1" y="635.3" width="3.8" height="10.0" fill="#666262"/><rect x="690.2" y="408.9" width="7.7" height="2.0" fill="#666262"/><rect x="690.2" y="464.5" width="7.7" height="2.0" fill="#666262"/><rect x="690.2" y="520.1" width="7.7" height="2.0" fill="#666262"/><rect x="690.2" y="575.7" width="7.7" height="2.0" fill="#666262"/><rect x="690.2" y="631.4" width="7.7" height="2.0" fill="#666262"/><rect x="690.2" y="687.0" width="7.7" height="2.0" fill="#666262"/><rect x="756.0" y="377.1" width="2" height="287.3" fill="#666262"/><rect x="755.4" y="380.0" width="3.2" height="8.6" fill="#666262"/><rect x="755.4" y="427.8" width="3.2" height="8.6" fill="#666262"/><rect x="755.4" y="475.7" width="3.2" height="8.6" fill="#666262"/><rect x="755.4" y="523.6" width="3.2" height="8.6" fill="#666262"/><rect x="755.4" y="571.5" width="3.2" height="8.6" fill="#666262"/><rect x="755.4" y="619.3" width="3.2" height="8.6" fill="#666262"/><rect x="753.8" y="424.5" width="6.4" height="1.7" fill="#666262"/><rect x="753.8" y="472.4" width="6.4" height="1.7" fill="#666262"/><rect x="753.8" y="520.2" width="6.4" height="1.7" fill="#666262"/><rect x="753.8" y="568.1" width="6.4" height="1.7" fill="#666262"/><rect x="753.8" y="616.0" width="6.4" height="1.7" fill="#666262"/><rect x="753.8" y="663.9" width="6.4" height="1.7" fill="#666262"/><rect x="804.1" y="394.8" width="1.8" height="251.8" fill="#666262"/><rect x="803.6" y="397.4" width="2.9" height="7.6" fill="#666262"/><rect x="803.6" y="439.3" width="2.9" height="7.6" fill="#666262"/><rect x="803.6" y="481.3" width="2.9" height="7.6" fill="#666262"/><rect x="803.6" y="523.3" width="2.9" height="7.6" fill="#666262"/><rect x="803.6" y="565.2" width="2.9" height="7.6" fill="#666262"/><rect x="803.6" y="607.2" width="2.9" height="7.6" fill="#666262"/><rect x="802.1" y="436.4" width="5.8" height="1.5" fill="#666262"/><rect x="802.1" y="478.4" width="5.8" height="1.5" fill="#666262"/><rect x="802.1" y="520.3" width="5.8" height="1.5" fill="#666262"/><rect x="802.1" y="562.3" width="5.8" height="1.5" fill="#666262"/><rect x="802.1" y="604.3" width="5.8" height="1.5" fill="#666262"/><rect x="802.1" y="646.2" width="5.8" height="1.5" fill="#666262"/><rect x="842.2" y="408.9" width="1.6" height="223.7" fill="#666262"/><rect x="841.7" y="411.1" width="2.6" height="6.7" fill="#666262"/><rect x="841.7" y="448.4" width="2.6" height="6.7" fill="#666262"/><rect x="841.7" y="485.7" width="2.6" height="6.7" fill="#666262"/><rect x="841.7" y="523.0" width="2.6" height="6.7" fill="#666262"/><rect x="841.7" y="560.3" width="2.6" height="6.7" fill="#666262"/><rect x="841.7" y="597.6" width="2.6" height="6.7" fill="#666262"/><rect x="840.4" y="445.8" width="5.1" height="1.3" fill="#666262"/><rect x="840.4" y="483.1" width="5.1" height="1.3" fill="#666262"/><rect x="840.4" y="520.4" width="5.1" height="1.3" fill="#666262"/><rect x="840.4" y="557.7" width="5.1" height="1.3" fill="#666262"/><rect x="840.4" y="595.0" width="5.1" height="1.3" fill="#666262"/><rect x="840.4" y="632.3" width="5.1" height="1.3" fill="#666262"/><rect x="872.2" y="420.0" width="1.5" height="201.6" fill="#666262"/><rect x="871.8" y="422.0" width="2.4" height="6.0" fill="#666262"/><rect x="871.8" y="455.6" width="2.4" height="6.0" fill="#666262"/><rect x="871.8" y="489.2" width="2.4" height="6.0" fill="#666262"/><rect x="871.8" y="522.8" width="2.4" height="6.0" fill="#666262"/><rect x="871.8" y="556.4" width="2.4" height="6.0" fill="#666262"/><rect x="871.8" y="590.0" width="2.4" height="6.0" fill="#666262"/><rect x="870.6" y="453.3" width="4.8" height="1.2" fill="#666262"/><rect x="870.6" y="486.9" width="4.8" height="1.2" fill="#666262"/><rect x="870.6" y="520.5" width="4.8" height="1.2" fill="#666262"/><rect x="870.6" y="554.1" width="4.8" height="1.2" fill="#666262"/><rect x="870.6" y="587.7" width="4.8" height="1.2" fill="#666262"/><rect x="870.6" y="621.3" width="4.8" height="1.2" fill="#666262"/><rect x="897.3" y="429.3" width="1.4" height="183.1" fill="#666262"/><rect x="896.9" y="431.1" width="2.2" height="5.5" fill="#666262"/><rect x="896.9" y="461.6" width="2.2" height="5.5" fill="#666262"/><rect x="896.9" y="492.1" width="2.2" height="5.5" fill="#666262"/><rect x="896.9" y="522.7" width="2.2" height="5.5" fill="#666262"/><rect x="896.9" y="553.2" width="2.2" height="5.5" fill="#666262"/><rect x="896.9" y="583.7" width="2.2" height="5.5" fill="#666262"/><rect x="895.8" y="459.5" width="4.5" height="1.1" fill="#666262"/><rect x="895.8" y="490.0" width="4.5" height="1.1" fill="#666262"/><rect x="895.8" y="520.5" width="4.5" height="1.1" fill="#666262"/><rect x="895.8" y="551.0" width="4.5" height="1.1" fill="#666262"/><rect x="895.8" y="581.6" width="4.5" height="1.1" fill="#666262"/><rect x="895.8" y="612.1" width="4.5" height="1.1" fill="#666262"/><rect x="917.4" y="436.7" width="1.3" height="168.4" fill="#666262"/><rect x="917.0" y="438.3" width="2.1" height="5.1" fill="#666262"/><rect x="917.0" y="466.4" width="2.1" height="5.1" fill="#666262"/><rect x="917.0" y="494.5" width="2.1" height="5.1" fill="#666262"/><rect x="917.0" y="522.5" width="2.1" height="5.1" fill="#666262"/><rect x="917.0" y="550.6" width="2.1" height="5.1" fill="#666262"/><rect x="917.0" y="578.6" width="2.1" height="5.1" fill="#666262"/><rect x="915.9" y="464.4" width="4.2" height="1.0" fill="#666262"/><rect x="915.9" y="492.5" width="4.2" height="1.0" fill="#666262"/><rect x="915.9" y="520.6" width="4.2" height="1.0" fill="#666262"/><rect x="915.9" y="548.6" width="4.2" height="1.0" fill="#666262"/><rect x="915.9" y="576.7" width="4.2" height="1.0" fill="#666262"/><rect x="915.9" y="604.7" width="4.2" height="1.0" fill="#666262"/><rect x="935.4" y="443.3" width="1.2" height="155.1" fill="#666262"/><rect x="935.0" y="444.9" width="1.9" height="4.7" fill="#666262"/><rect x="935.0" y="470.7" width="1.9" height="4.7" fill="#666262"/><rect x="935.0" y="496.6" width="1.9" height="4.7" fill="#666262"/><rect x="935.0" y="522.4" width="1.9" height="4.7" fill="#666262"/><rect x="935.0" y="548.2" width="1.9" height="4.7" fill="#666262"/><rect x="935.0" y="574.1" width="1.9" height="4.7" fill="#666262"/><rect x="934.1" y="468.9" width="3.8" height="1.0" fill="#666262"/><rect x="934.1" y="494.7" width="3.8" height="1.0" fill="#666262"/><rect x="934.1" y="520.6" width="3.8" height="1.0" fill="#666262"/><rect x="934.1" y="546.4" width="3.8" height="1.0" fill="#666262"/><rect x="934.1" y="572.3" width="3.8" height="1.0" fill="#666262"/><rect x="934.1" y="598.1" width="3.8" height="1.0" fill="#666262"/><rect x="544.0" y="298.3" width="1" height="444.5" fill="#858080"/><rect x="652.0" y="338.2" width="1" height="364.8" fill="#858080"/><rect x="730.0" y="367.1" width="1" height="307.2" fill="#858080"/><rect x="784.0" y="387.1" width="1" height="267.3" fill="#858080"/><rect x="826.0" y="402.6" width="1" height="236.3" fill="#858080"/><polygon points="454,435.0 951,496.5 951,498.1 454,439.0" fill="#666262"/><rect x="454.0" y="433.4" width="16.0" height="7.2" fill="#666262" opacity="0.9"/><rect x="473.7" y="435.9" width="15.5" height="7.0" fill="#666262" opacity="0.9"/><rect x="493.2" y="438.4" width="15.1" height="6.8" fill="#666262" opacity="0.9"/><rect x="512.3" y="440.8" width="14.7" height="6.6" fill="#666262" opacity="0.9"/><rect x="531.1" y="443.2" width="14.2" height="6.4" fill="#666262" opacity="0.9"/><rect x="549.6" y="445.5" width="13.8" height="6.2" fill="#666262" opacity="0.9"/><rect x="567.8" y="447.8" width="13.4" height="6.0" fill="#666262" opacity="0.9"/><rect x="585.7" y="450.1" width="13.0" height="5.8" fill="#666262" opacity="0.9"/><rect x="603.2" y="452.3" width="12.5" height="5.6" fill="#666262" opacity="0.9"/><rect x="620.4" y="454.5" width="12.2" height="5.5" fill="#666262" opacity="0.9"/><rect x="637.3" y="456.6" width="11.8" height="5.3" fill="#666262" opacity="0.9"/><rect x="653.9" y="458.7" width="11.4" height="5.1" fill="#666262" opacity="0.9"/><rect x="670.1" y="460.8" width="11.0" height="5.0" fill="#666262" opacity="0.9"/><rect x="686.0" y="462.8" width="10.6" height="4.8" fill="#666262" opacity="0.9"/><rect x="701.5" y="464.7" width="10.3" height="4.6" fill="#666262" opacity="0.9"/><rect x="716.7" y="466.7" width="9.9" height="4.5" fill="#666262" opacity="0.9"/><rect x="731.5" y="468.5" width="9.6" height="4.3" fill="#666262" opacity="0.9"/><rect x="746.0" y="470.4" width="9.2" height="4.2" fill="#666262" opacity="0.9"/><rect x="760.0" y="472.1" width="8.9" height="4.0" fill="#666262" opacity="0.9"/><rect x="773.7" y="473.9" width="8.6" height="3.9" fill="#666262" opacity="0.9"/><rect x="787.1" y="475.6" width="8.3" height="3.7" fill="#666262" opacity="0.9"/><rect x="800.0" y="477.2" width="8.0" height="3.6" fill="#666262" opacity="0.9"/><rect x="812.5" y="478.8" width="7.7" height="3.5" fill="#666262" opacity="0.9"/><rect x="824.6" y="480.3" width="7.4" height="3.3" fill="#666262" opacity="0.9"/><rect x="836.3" y="481.8" width="7.2" height="3.2" fill="#666262" opacity="0.9"/><rect x="847.5" y="483.2" width="6.9" height="3.1" fill="#666262" opacity="0.9"/><rect x="858.3" y="484.6" width="6.7" height="3.0" fill="#666262" opacity="0.9"/><rect x="868.7" y="485.9" width="6.4" height="2.9" fill="#666262" opacity="0.9"/><rect x="878.6" y="487.1" width="6.2" height="2.8" fill="#666262" opacity="0.9"/><rect x="888.0" y="488.3" width="6.0" height="2.7" fill="#666262" opacity="0.9"/><rect x="896.9" y="489.5" width="5.8" height="2.6" fill="#666262" opacity="0.9"/><rect x="905.3" y="490.5" width="5.6" height="2.5" fill="#666262" opacity="0.9"/><rect x="913.2" y="491.5" width="5.4" height="2.4" fill="#666262" opacity="0.9"/><rect x="920.4" y="492.4" width="5.2" height="2.3" fill="#666262" opacity="0.9"/><rect x="927.1" y="493.3" width="5.1" height="2.3" fill="#666262" opacity="0.9"/><rect x="933.2" y="494.1" width="4.9" height="2.2" fill="#666262" opacity="0.9"/><rect x="938.5" y="494.7" width="4.8" height="2.2" fill="#666262" opacity="0.9"/><rect x="943.1" y="495.3" width="4.7" height="2.1" fill="#666262" opacity="0.9"/><rect x="946.9" y="495.8" width="4.6" height="2.1" fill="#666262" opacity="0.9"/><rect x="949.6" y="496.1" width="4.5" height="2.0" fill="#666262" opacity="0.9"/><polygon points="454,603.0 951,543.9 951,545.5 454,607.0" fill="#666262"/><rect x="454.0" y="601.4" width="16.0" height="7.2" fill="#666262" opacity="0.9"/><rect x="473.7" y="599.1" width="15.5" height="7.0" fill="#666262" opacity="0.9"/><rect x="493.2" y="596.9" width="15.1" height="6.8" fill="#666262" opacity="0.9"/><rect x="512.3" y="594.6" width="14.7" height="6.6" fill="#666262" opacity="0.9"/><rect x="531.1" y="592.4" width="14.2" height="6.4" fill="#666262" opacity="0.9"/><rect x="549.6" y="590.3" width="13.8" height="6.2" fill="#666262" opacity="0.9"/><rect x="567.8" y="588.2" width="13.4" height="6.0" fill="#666262" opacity="0.9"/><rect x="585.7" y="586.1" width="13.0" height="5.8" fill="#666262" opacity="0.9"/><rect x="603.2" y="584.1" width="12.5" height="5.6" fill="#666262" opacity="0.9"/><rect x="620.4" y="582.1" width="12.2" height="5.5" fill="#666262" opacity="0.9"/><rect x="637.3" y="580.1" width="11.8" height="5.3" fill="#666262" opacity="0.9"/><rect x="653.9" y="578.2" width="11.4" height="5.1" fill="#666262" opacity="0.9"/><rect x="670.1" y="576.3" width="11.0" height="5.0" fill="#666262" opacity="0.9"/><rect x="686.0" y="574.4" width="10.6" height="4.8" fill="#666262" opacity="0.9"/><rect x="701.5" y="572.6" width="10.3" height="4.6" fill="#666262" opacity="0.9"/><rect x="716.7" y="570.9" width="9.9" height="4.5" fill="#666262" opacity="0.9"/><rect x="731.5" y="569.2" width="9.6" height="4.3" fill="#666262" opacity="0.9"/><rect x="746.0" y="567.5" width="9.2" height="4.2" fill="#666262" opacity="0.9"/><rect x="760.0" y="565.8" width="8.9" height="4.0" fill="#666262" opacity="0.9"/><rect x="773.7" y="564.3" width="8.6" height="3.9" fill="#666262" opacity="0.9"/><rect x="787.1" y="562.7" width="8.3" height="3.7" fill="#666262" opacity="0.9"/><rect x="800.0" y="561.2" width="8.0" height="3.6" fill="#666262" opacity="0.9"/><rect x="812.5" y="559.7" width="7.7" height="3.5" fill="#666262" opacity="0.9"/><rect x="824.6" y="558.3" width="7.4" height="3.3" fill="#666262" opacity="0.9"/><rect x="836.3" y="557.0" width="7.2" height="3.2" fill="#666262" opacity="0.9"/><rect x="847.5" y="555.7" width="6.9" height="3.1" fill="#666262" opacity="0.9"/><rect x="858.3" y="554.4" width="6.7" height="3.0" fill="#666262" opacity="0.9"/><rect x="868.7" y="553.2" width="6.4" height="2.9" fill="#666262" opacity="0.9"/><rect x="878.6" y="552.1" width="6.2" height="2.8" fill="#666262" opacity="0.9"/><rect x="888.0" y="551.0" width="6.0" height="2.7" fill="#666262" opacity="0.9"/><rect x="896.9" y="549.9" width="5.8" height="2.6" fill="#666262" opacity="0.9"/><rect x="905.3" y="549.0" width="5.6" height="2.5" fill="#666262" opacity="0.9"/><rect x="913.2" y="548.1" width="5.4" height="2.4" fill="#666262" opacity="0.9"/><rect x="920.4" y="547.2" width="5.2" height="2.3" fill="#666262" opacity="0.9"/><rect x="927.1" y="546.4" width="5.1" height="2.3" fill="#666262" opacity="0.9"/><rect x="933.2" y="545.7" width="4.9" height="2.2" fill="#666262" opacity="0.9"/><rect x="938.5" y="545.1" width="4.8" height="2.2" fill="#666262" opacity="0.9"/><rect x="943.1" y="544.6" width="4.7" height="2.1" fill="#666262" opacity="0.9"/><rect x="946.9" y="544.1" width="4.6" height="2.1" fill="#666262" opacity="0.9"/><rect x="949.6" y="543.8" width="4.5" height="2.0" fill="#666262" opacity="0.9"/><text x="472" y="436" font-family="Liberation Mono" font-size="10" fill="#615d5d" transform="rotate(7 472 436)" textLength="33">1METER</text><text x="606" y="452" font-family="Liberation Mono" font-size="7" fill="#615d5d" transform="rotate(6 606 452)" textLength="23">1METER</text><text x="695" y="463" font-family="Liberation Mono" font-size="5.5" fill="#615d5d" transform="rotate(5 695 463)" textLength="18">1METER</text><text x="472" y="598" font-family="Liberation Mono" font-size="10" fill="#615d5d" transform="rotate(-7 472 598)" textLength="33">1METER</text><text x="606" y="582" font-family="Liberation Mono" font-size="7" fill="#615d5d" transform="rotate(-6 606 582)" textLength="23">1METER</text><text x="695" y="572" font-family="Liberation Mono" font-size="5.5" fill="#615d5d" transform="rotate(-5 695 572)" textLength="18">1METER</text><line x1="454" y1="351" x2="951" y2="473.1" stroke="#837e7d" stroke-width="1"/><line x1="454" y1="521" x2="951" y2="521.0" stroke="#837e7d" stroke-width="1"/><line x1="454" y1="690" x2="951" y2="568.6" stroke="#837e7d" stroke-width="1"/><rect x="869" y="622.4" width="963" height="1.3" fill="#8f8987" opacity="0.55"/><rect x="804" y="646.4" width="1028" height="1.3" fill="#8f8987" opacity="0.6"/><rect x="752" y="665.4" width="1080" height="1.3" fill="#8f8987" opacity="0.6"/><rect x="690" y="688.4" width="1142" height="1.3" fill="#8f8987" opacity="0.65"/><rect x="600" y="721.4" width="1232" height="1.3" fill="#8f8987" opacity="0.75"/><rect x="454" y="772" width="1378" height="2.2" fill="#86807f"/><rect x="414" y="771" width="56" height="4.2" fill="#736e6d"/><rect x="476" y="771" width="56" height="4.2" fill="#736e6d"/><rect x="683" y="771" width="56" height="4.2" fill="#736e6d"/><rect x="745" y="771" width="56" height="4.2" fill="#736e6d"/><rect x="952" y="771" width="56" height="4.2" fill="#736e6d"/><rect x="1014" y="771" width="56" height="4.2" fill="#736e6d"/><rect x="1221" y="771" width="56" height="4.2" fill="#736e6d"/><rect x="1283" y="771" width="56" height="4.2" fill="#736e6d"/><rect x="1489" y="771" width="56" height="4.2" fill="#736e6d"/><rect x="1552" y="771" width="56" height="4.2" fill="#736e6d"/><rect x="1758" y="771" width="56" height="4.2" fill="#736e6d"/><rect x="1821" y="771" width="56" height="4.2" fill="#736e6d"/><rect x="2027" y="771" width="56" height="4.2" fill="#736e6d"/><rect x="2089" y="771" width="56" height="4.2" fill="#736e6d"/><rect x="454" y="856" width="1378" height="2.2" fill="#86807f"/><rect x="171" y="855" width="75" height="4.2" fill="#736e6d"/><rect x="252" y="855" width="75" height="4.2" fill="#736e6d"/><rect x="529" y="855" width="75" height="4.2" fill="#736e6d"/><rect x="610" y="855" width="75" height="4.2" fill="#736e6d"/><rect x="888" y="855" width="75" height="4.2" fill="#736e6d"/><rect x="969" y="855" width="75" height="4.2" fill="#736e6d"/><rect x="1246" y="855" width="75" height="4.2" fill="#736e6d"/><rect x="1327" y="855" width="75" height="4.2" fill="#736e6d"/><rect x="1605" y="855" width="75" height="4.2" fill="#736e6d"/><rect x="1686" y="855" width="75" height="4.2" fill="#736e6d"/><rect x="1963" y="855" width="75" height="4.2" fill="#736e6d"/><rect x="2044" y="855" width="75" height="4.2" fill="#736e6d"/><rect x="2322" y="855" width="75" height="4.2" fill="#736e6d"/><rect x="2403" y="855" width="75" height="4.2" fill="#736e6d"/><polygon points="454,776 951,593 951,596 700,690 454,784" fill="#8c8786" opacity="0.55"/><rect x="454" y="777" width="18" height="4.0" fill="#858080" opacity="0.7"/><rect x="477" y="768" width="17" height="3.9" fill="#858080" opacity="0.7"/><rect x="501" y="760" width="17" height="3.7" fill="#858080" opacity="0.7"/><rect x="524" y="751" width="16" height="3.6" fill="#858080" opacity="0.7"/><rect x="547" y="742" width="15" height="3.4" fill="#858080" opacity="0.7"/><rect x="571" y="733" width="15" height="3.3" fill="#858080" opacity="0.7"/><rect x="594" y="725" width="14" height="3.1" fill="#858080" opacity="0.7"/><rect x="617" y="716" width="13" height="3.0" fill="#858080" opacity="0.7"/><rect x="641" y="707" width="13" height="2.9" fill="#858080" opacity="0.7"/><rect x="664" y="699" width="12" height="2.7" fill="#858080" opacity="0.7"/><rect x="687" y="690" width="11" height="2.6" fill="#858080" opacity="0.7"/><rect x="711" y="681" width="11" height="2.4" fill="#858080" opacity="0.7"/><rect x="734" y="672" width="10" height="2.3" fill="#858080" opacity="0.7"/><rect x="757" y="664" width="9" height="2.1" fill="#858080" opacity="0.7"/><rect x="781" y="655" width="9" height="2.0" fill="#858080" opacity="0.7"/><rect x="804" y="646" width="8" height="1.9" fill="#858080" opacity="0.7"/><rect x="827" y="638" width="7" height="1.7" fill="#858080" opacity="0.7"/><rect x="851" y="629" width="7" height="1.6" fill="#858080" opacity="0.7"/><rect x="874" y="620" width="6" height="1.4" fill="#858080" opacity="0.7"/><rect x="897" y="611" width="5" height="1.3" fill="#858080" opacity="0.7"/><rect x="921" y="603" width="5" height="1.1" fill="#858080" opacity="0.7"/><rect x="944" y="594" width="4" height="1.0" fill="#858080" opacity="0.7"/><line x1="524.0" y1="909.0" x2="1030.6" y2="593.0" stroke="#948e8c" stroke-width="1.2" opacity="0.55"/><line x1="938.0" y1="909.0" x2="1107.4" y2="593.0" stroke="#948e8c" stroke-width="1.2" opacity="0.55"/><line x1="1352.0" y1="909.0" x2="1184.2" y2="593.0" stroke="#948e8c" stroke-width="1.2" opacity="0.55"/><line x1="1766.0" y1="909.0" x2="1261.1" y2="593.0" stroke="#948e8c" stroke-width="1.2" opacity="0.55"/><line x1="1832.0" y1="765.0" x2="1348.5" y2="593.0" stroke="#948e8c" stroke-width="1.2" opacity="0.55"/><line x1="1832.0" y1="703.1" x2="1417.3" y2="593.0" stroke="#948e8c" stroke-width="1.2" opacity="0.55"/><polygon points="1566,593 1576,593 1832,634 1832,640" fill="#8c8a8f" opacity="0.85"/><polygon points="1255,593 1267,593 1330,628 1330,640" fill="#8a898f" opacity="0.9"/><polygon points="1498,745 1534,745 1802,909 1752,909" fill="#74706f"/><rect x="1488" y="748" width="55" height="7" fill="#787473"/><rect x="1509" y="760" width="55" height="5" fill="#787473"/><rect x="1532" y="772" width="48" height="7" fill="#787473"/><rect x="1556" y="784" width="40" height="7" fill="#787473"/><rect x="1576" y="796" width="40" height="5" fill="#787473"/><rect x="1581" y="808" width="70" height="7" fill="#787473"/><rect x="1609" y="820" width="55" height="3" fill="#787473"/><rect x="1633" y="833" width="48" height="7" fill="#787473"/><rect x="1653" y="845" width="48" height="5" fill="#787473"/><rect x="1669" y="857" width="55" height="3" fill="#787473"/><rect x="1689" y="869" width="55" height="7" fill="#787473"/><rect x="1713" y="881" width="48" height="7" fill="#787473"/><rect x="1737" y="893" width="40" height="7" fill="#787473"/><rect x="1757" y="905" width="40" height="3" fill="#787473"/><g fill="#8e8886" opacity="0.7"><rect x="1607" y="775" width="70" height="5"/><rect x="1745" y="860" width="80" height="6"/><rect x="1530" y="732" width="35" height="3"/></g><polygon points="1262,684 1326,684 1326,704 1366,744 1277,710" fill="#56677f"/><path d="M1000,709 L1060,700 L1120,712 L1175,726 L1230,742 L1276,742 L1300,752 L1262,756 L1215,754 L1160,764 L1095,770 L1040,772 L1000,768 L1030,752 L994,745 L1020,735z" fill="#5a6b83"/><polygon points="1326,583 1446,582 1516,596 1366.5,596" fill="#a6a1a4"/><polygon points="1326,583 1366.5,596 1366.5,744 1326,704.5" fill="url(#cl)"/><rect x="1366.5" y="596" width="149.5" height="149" fill="url(#cf)"/><path d="M1111,661 L1125,640 L1160,600 L1185,610 L1199,640 L1205,690 L1195,735 L1160,738 L1131,728 L1118,700z" fill="#dedde2"/><path d="M1140,738 C1150,748 1165,748 1172,738z" fill="#e4dcda"/><path d="M1160,690 L1166,688 L1190,735 L1184,737z M1140,712 L1190,722 L1189,725 L1140,715z M1150,650 L1175,645 L1176,649 L1151,654z" fill="#2f3648" opacity="0.85"/><polygon points="1182,645 1210,644 1212,668 1186,672" fill="#3b3b3d"/><polygon points="1207,641.6 1218,641.6 1230,650 1242,670 1228,680 1210,690 1198,698.5 1186,670 1193,658" fill="#46578a"/><polygon points="1200,668 1223,654 1236,667 1237,672 1213,686 1208,680" fill="#2e292d"/><polygon points="1204,698.5 1227,681 1250,671 1259,676 1276.6,715.6 1272.6,724.6 1236,745.8 1227,740.7 1207,719.6" fill="#e2e0e4"/><polygon points="1222,696 1244,684 1256,692 1264.5,710.5 1236,731.7 1227,718.6" fill="#5d5c60"/><polygon points="1250,682 1259,678 1261,684 1252,688" fill="#8a93b5"/><polygon points="1208,706 1220,700 1222,707 1210,712" fill="#8a93b5"/><circle cx="1232" cy="694.5" r="7.5" fill="#505054" stroke="#cf8a3a" stroke-width="1.8"/><circle cx="1232" cy="694.5" r="3.5" fill="#3f72b0"/><circle cx="1241" cy="710.5" r="8.5" fill="#505054" stroke="#cf8a3a" stroke-width="1.8"/><circle cx="1241" cy="710.5" r="4" fill="#3f72b0"/><path d="M1119,530 C1125,520 1140,516 1155,516 C1180,516 1200,530 1204,558 C1206,575 1200,588 1195,592 L1167,600 L1159,621 L1157,641 C1152,660 1147,672 1143,681 L1131,709 L1111,731 L1070,751 L1054,770 L1062,752 L1020,757 L1046,736 L1000,723 L1030,712 L1004,701 L1036,688 L1034,673 L1052,669 L1090,660 C1103,632 1108,590 1110,560 C1112,545 1114,535 1119,530z" fill="url(#hair)"/><path d="M1199,560 C1196,600 1190,650 1199,705 L1194,705 C1186,660 1188,610 1193,575z" fill="#5c7285"/><path d="M1167,590 L1190,594 L1186,608 L1168,610z" fill="#e8e2e0"/><path d="M1170,608 L1192,604 L1196,616 L1174,622z" fill="#2c3140"/><path d="M1180,522 L1200,530 L1203,548 L1188,545z" fill="#2f3447"/><path d="M1119,530 L1114,537 L1122,542z" fill="#2f3447"/><g fill="none" stroke="#34404f" stroke-width="0.8" opacity="0.8"><path d="M1160,530 C1140,580 1130,650 1060,730"/><path d="M1175,540 C1160,600 1148,660 1090,740"/><path d="M1140,560 C1125,620 1105,670 1030,712"/><path d="M1150,600 C1140,650 1120,700 1046,736"/></g><g fill="#afdcca" fill-rule="evenodd" opacity="0.95"><path d="M1110,432 H1126 V437.5 H1110z"/><path d="M1104.8,437 H1146.8 V462.2 H1104.8z M1110,441 H1142.3 V458.7 H1109.6z"/><path d="M1129.8,432 H1179 L1181,461.3 H1130z M1136,436.2 H1174 L1175,456.2 H1136z"/><path d="M1138,461.3 H1169 V474.9 H1138z M1142.2,462.3 H1164.8 V471.1 H1142.2z"/></g></svg>
<div style="left:1834px;top:73px;width:726px;height:19px;background:#282828;"></div>
<div style="left:1834px;top:73px;width:93px;height:19px;background:#3c3c3c;border-radius:3px 3px 0 0"></div>
<div style="left:1834px;top:73px;width:93px;height:2px;background:#3a79bb;border-radius:2px 2px 0 0"></div>
<svg style="left:1842px;top:77px" width="12" height="12" viewBox="0 0 12 12"><circle cx="6" cy="6" r="5.5" fill="#c4c4c4"/><rect x="5.1" y="5" width="1.8" height="4.5" fill="#3c3c3c"/><circle cx="6" cy="3.3" r="1" fill="#3c3c3c"/></svg>
<div class="t" style="left:1859px;top:76px;color:#c4c4c4;font-size:12.5px;">Inspector</div>
<svg style="left:1937px;top:77px" width="10" height="12" viewBox="0 0 10 12"><circle cx="5" cy="4.5" r="4" fill="#c4c4c4"/><rect x="3.2" y="8" width="3.6" height="3" fill="#c4c4c4"/></svg>
<div class="t" style="left:1952px;top:76px;color:#c4c4c4;font-size:12.5px;">Lighting</div>
<svg style="left:2524px;top:75px" width="12" height="13" viewBox="0 0 12 13"><rect x="2" y="7" width="8" height="4.5" rx="0.8" fill="none" stroke="#c4c4c4" stroke-width="1.2"/><path d="M8.2 7 V4 a2.6 2.6 0 0 0 -5.2 0" fill="none" stroke="#c4c4c4" stroke-width="1.2"/></svg>
<svg style="left:2546px;top:76px" width="4" height="12"><rect x="0.6" y="0.8" width="2.3" height="2.3" rx="0.6" fill="#c4c4c4"/><rect x="0.6" y="4.8" width="2.3" height="2.3" rx="0.6" fill="#c4c4c4"/><rect x="0.6" y="8.8" width="2.3" height="2.3" rx="0.6" fill="#c4c4c4"/></svg>
<div style="left:1834px;top:92px;width:726px;height:59px;background:#3e3e3e;"></div>
<div style="left:1834px;top:151px;width:726px;height:1px;background:#232323;"></div>
<svg style="left:1840px;top:102px" width="30" height="28" viewBox="0 0 30 28"><path d="M11.5 1 L20.8 5.8 V15.8 L11.5 20.8 L2.2 15.8 V5.8Z M2.2 5.8 L11.5 10.6 L20.8 5.8 M11.5 10.6 V20.8" fill="none" stroke="#c8c8c8" stroke-width="1.5" stroke-linejoin="round"/><path d="M20.5 21.5 h7.5 l-3.75 3.8z" fill="#c4c4c4"/></svg>
<div style="left:1881px;top:103px;width:14px;height:14px;background:#2a2a2a;border:1px solid #212121;border-radius:2px"></div>
<svg style="left:1881px;top:103px" width="14" height="14" viewBox="0 0 14 14"><path d="M3 7.2 L5.8 10 L11 4.2" fill="none" stroke="#d6d6d6" stroke-width="1.6"/></svg>
<div style="left:1901px;top:101px;width:577px;height:18px;background:#2a2a2a;border:1px solid #212121;border-radius:3px"></div>
<div class="t" style="left:1904px;top:103px;color:#d2d2d2;font-size:12.5px;font-weight:bold">Player</div>
<div style="left:2483px;top:103px;width:14px;height:14px;background:#2a2a2a;border:1px solid #212121;border-radius:2px"></div>
<div class="t" style="left:2501px;top:103px;color:#c4c4c4;font-size:12.5px;">Static</div>
<svg style="left:2543px;top:107px" width="10" height="7"><path d="M0.5 0.5 H9.5 L5 5.5z" fill="#c4c4c4"/></svg>
<div class="t" style="left:1874px;top:127px;color:#c4c4c4;font-size:12.5px;">Tag</div>
<div style="left:1901px;top:126px;width:307px;height:17px;background:#515151;border:1px solid #303030;border-radius:3px"></div>
<div class="t" style="left:1904px;top:127px;color:#d2d2d2;font-size:12.5px;">Player</div>
<svg style="left:2194px;top:131px" width="10" height="7"><path d="M0.5 0.5 H9.5 L5 5.5z" fill="#c4c4c4"/></svg>
<div class="t" style="left:2221px;top:127px;color:#c4c4c4;font-size:12.5px;">Layer</div>
<div style="left:2258px;top:126px;width:297px;height:17px;background:#515151;border:1px solid #303030;border-radius:3px"></div>
<div class="t" style="left:2261px;top:127px;color:#d2d2d2;font-size:12.5px;">Default</div>
<svg style="left:2540px;top:131px" width="10" height="7"><path d="M0.5 0.5 H9.5 L5 5.5z" fill="#c4c4c4"/></svg>
<div style="left:1834px;top:151px;width:726px;height:1px;background:#1f1f1f;"></div>
<div style="left:1834px;top:152px;width:726px;height:20px;background:#3e3e3e;"></div>
<div style="left:1834px;top:172px;width:726px;height:1px;background:#303030;"></div>
<svg style="left:1839px;top:159px" width="10" height="9"><path d="M0.5 1 H9 L4.75 8z" fill="#7b7b7b"/></svg>
<svg style="left:1855px;top:155px" width="14" height="14" viewBox="0 0 14 14"><path d="M7 1.5 V7" stroke="#9ee048" stroke-width="2.2" stroke-linecap="round"/><path d="M7 7.5 L2.5 10.5" stroke="#5fc2f0" stroke-width="2.2" stroke-linecap="round"/><path d="M7 7.5 L11.5 10.5" stroke="#f0643c" stroke-width="2.2" stroke-linecap="round"/></svg>
<div class="t" style="left:1894px;top:155px;color:#d2d2d2;font-size:12.5px;font-weight:bold">Transform</div>
<svg style="left:2500px;top:156px" width="40" height="12" viewBox="0 0 40 12"><circle cx="6" cy="6" r="5.5" fill="#c4c4c4"/><path d="M4.2 4.5 a1.8 1.8 0 1 1 2.6 1.6 Q6 6.6 6 7.5" fill="none" stroke="#3e3e3e" stroke-width="1.3"/><circle cx="6" cy="9.3" r="0.8" fill="#3e3e3e"/><path d="M21 3 H32 M21 9 H32 M28 0.5 V5.5 M24.5 6.5 V11.5" stroke="#c4c4c4" stroke-width="1.3"/></svg>
<svg style="left:2545px;top:156px" width="4" height="12"><rect x="0.6" y="0.8" width="2.3" height="2.3" rx="0.6" fill="#c4c4c4"/><rect x="0.6" y="4.8" width="2.3" height="2.3" rx="0.6" fill="#c4c4c4"/><rect x="0.6" y="8.8" width="2.3" height="2.3" rx="0.6" fill="#c4c4c4"/></svg>
<div style="left:1834px;top:173px;width:726px;height:71px;background:#383838;"></div>
<div class="t" style="left:1853px;top:179px;color:#c4c4c4;font-size:12.5px;">Position</div>
<div class="t" style="left:2141px;top:179px;color:#c4c4c4;font-size:12.5px;">X</div>
<div style="left:2156px;top:177px;width:120px;height:18px;background:#2a2a2a;border:1px solid #212121;border-radius:3px"></div>
<div class="t" style="left:2159px;top:179px;color:#c4c4c4;font-size:12.5px;">0</div>
<div class="t" style="left:2282px;top:179px;color:#c4c4c4;font-size:12.5px;">Y</div>
<div style="left:2295px;top:177px;width:120px;height:18px;background:#2a2a2a;border:1px solid #212121;border-radius:3px"></div>
<div class="t" style="left:2298px;top:179px;color:#c4c4c4;font-size:12.5px;">2</div>
<div class="t" style="left:2421px;top:179px;color:#c4c4c4;font-size:12.5px;">Z</div>
<div style="left:2435px;top:177px;width:120px;height:18px;background:#2a2a2a;border:1px solid #212121;border-radius:3px"></div>
<div class="t" style="left:2438px;top:179px;color:#c4c4c4;font-size:12.5px;">0</div>
<div class="t" style="left:1853px;top:199px;color:#c4c4c4;font-size:12.5px;">Rotation</div>
<div class="t" style="left:2141px;top:199px;color:#c4c4c4;font-size:12.5px;">X</div>
<div style="left:2156px;top:197px;width:120px;height:18px;background:#2a2a2a;border:1px solid #212121;border-radius:3px"></div>
<div class="t" style="left:2159px;top:199px;color:#c4c4c4;font-size:12.5px;">0</div>
<div class="t" style="left:2282px;top:199px;color:#c4c4c4;font-size:12.5px;">Y</div>
<div style="left:2295px;top:197px;width:120px;height:18px;background:#2a2a2a;border:1px solid #212121;border-radius:3px"></div>
<div class="t" style="left:2298px;top:199px;color:#c4c4c4;font-size:12.5px;">0</div>
<div class="t" style="left:2421px;top:199px;color:#c4c4c4;font-size:12.5px;">Z</div>
<div style="left:2435px;top:197px;width:120px;height:18px;background:#2a2a2a;border:1px solid #212121;border-radius:3px"></div>
<div class="t" style="left:2438px;top:199px;color:#c4c4c4;font-size:12.5px;">0</div>
<div class="t" style="left:1853px;top:219px;color:#c4c4c4;font-size:12.5px;">Scale</div>
<div class="t" style="left:2141px;top:219px;color:#c4c4c4;font-size:12.5px;">X</div>
<div style="left:2156px;top:217px;width:120px;height:18px;background:#2a2a2a;border:1px solid #212121;border-radius:3px"></div>
<div class="t" style="left:2159px;top:219px;color:#c4c4c4;font-size:12.5px;">1</div>
<div class="t" style="left:2282px;top:219px;color:#c4c4c4;font-size:12.5px;">Y</div>
<div style="left:2295px;top:217px;width:120px;height:18px;background:#2a2a2a;border:1px solid #212121;border-radius:3px"></div>
<div class="t" style="left:2298px;top:219px;color:#c4c4c4;font-size:12.5px;">1</div>
<div class="t" style="left:2421px;top:219px;color:#c4c4c4;font-size:12.5px;">Z</div>
<div style="left:2435px;top:217px;width:120px;height:18px;background:#2a2a2a;border:1px solid #212121;border-radius:3px"></div>
<div class="t" style="left:2438px;top:219px;color:#c4c4c4;font-size:12.5px;">1</div>
<svg style="left:2119px;top:220px" width="14" height="12" viewBox="0 0 14 12"><path d="M4 3 H3 a3 3 0 0 0 0 6 H5 M9 3 H11 a3 3 0 0 1 0 6 H10 M5 6 H9 M2 1 L12 11" fill="none" stroke="#c4c4c4" stroke-width="1.1"/></svg>
<div style="left:1834px;top:244px;width:726px;height:1px;background:#1f1f1f;"></div>
<div style="left:1834px;top:245px;width:726px;height:20px;background:#3e3e3e;"></div>
<div style="left:1834px;top:265px;width:726px;height:1px;background:#303030;"></div>
<svg style="left:1839px;top:252px" width="10" height="9"><path d="M0.5 1 H9 L4.75 8z" fill="#7b7b7b"/></svg>
<svg style="left:1855px;top:248px" width="14" height="14" viewBox="0 0 14 14"><rect x="3.5" y="1" width="7" height="12" rx="3.5" fill="#a4e34a"/><path d="M1 2 V5 M1 9 V12 M13 2 V5 M13 9 V12 M1 12 H3.5 M13 12 H10.5" stroke="#a4e34a" stroke-width="1.4"/><rect x="5.5" y="4.5" width="3" height="5" fill="#3e3e3e"/></svg>
<div style="left:1874px;top:248px;width:14px;height:14px;background:#2a2a2a;border:1px solid #212121;border-radius:2px"></div>
<svg style="left:1874px;top:248px" width="14" height="14" viewBox="0 0 14 14"><path d="M3 7.2 L5.8 10 L11 4.2" fill="none" stroke="#d6d6d6" stroke-width="1.6"/></svg>
<div class="t" style="left:1894px;top:248px;color:#d2d2d2;font-size:12.5px;font-weight:bold">Character Controller</div>
<svg style="left:2500px;top:249px" width="40" height="12" viewBox="0 0 40 12"><circle cx="6" cy="6" r="5.5" fill="#c4c4c4"/><path d="M4.2 4.5 a1.8 1.8 0 1 1 2.6 1.6 Q6 6.6 6 7.5" fill="none" stroke="#3e3e3e" stroke-width="1.3"/><circle cx="6" cy="9.3" r="0.8" fill="#3e3e3e"/><path d="M21 3 H32 M21 9 H32 M28 0.5 V5.5 M24.5 6.5 V11.5" stroke="#c4c4c4" stroke-width="1.3"/></svg>
<svg style="left:2545px;top:249px" width="4" height="12"><rect x="0.6" y="0.8" width="2.3" height="2.3" rx="0.6" fill="#c4c4c4"/><rect x="0.6" y="4.8" width="2.3" height="2.3" rx="0.6" fill="#c4c4c4"/><rect x="0.6" y="8.8" width="2.3" height="2.3" rx="0.6" fill="#c4c4c4"/></svg>
<div style="left:1834px;top:266px;width:726px;height:165px;background:#383838;"></div>
<div class="t" style="left:1853px;top:272px;color:#c4c4c4;font-size:12.5px;">Slope Limit</div>
<div style="left:2141px;top:270px;width:414px;height:18px;background:#2a2a2a;border:1px solid #212121;border-radius:3px"></div>
<div class="t" style="left:2144px;top:272px;color:#c4c4c4;font-size:12.5px;">45</div>
<div class="t" style="left:1853px;top:292px;color:#c4c4c4;font-size:12.5px;">Step Offset</div>
<div style="left:2141px;top:290px;width:414px;height:18px;background:#2a2a2a;border:1px solid #212121;border-radius:3px"></div>
<div class="t" style="left:2144px;top:292px;color:#c4c4c4;font-size:12.5px;">0.3</div>
<div class="t" style="left:1853px;top:312px;color:#c4c4c4;font-size:12.5px;">Skin Width</div>
<div style="left:2141px;top:310px;width:414px;height:18px;background:#2a2a2a;border:1px solid #212121;border-radius:3px"></div>
<div class="t" style="left:2144px;top:312px;color:#c4c4c4;font-size:12.5px;">0.08</div>
<div class="t" style="left:1853px;top:332px;color:#c4c4c4;font-size:12.5px;">Min Move Distance</div>
<div style="left:2141px;top:330px;width:414px;height:18px;background:#2a2a2a;border:1px solid #212121;border-radius:3px"></div>
<div class="t" style="left:2144px;top:332px;color:#c4c4c4;font-size:12.5px;">0.001</div>
<div class="t" style="left:1853px;top:352px;color:#c4c4c4;font-size:12.5px;">Center</div>
<div class="t" style="left:2141px;top:352px;color:#c4c4c4;font-size:12.5px;">X</div>
<div style="left:2156px;top:350px;width:120px;height:18px;background:#2a2a2a;border:1px solid #212121;border-radius:3px"></div>
<div class="t" style="left:2159px;top:352px;color:#c4c4c4;font-size:12.5px;">0</div>
<div class="t" style="left:2282px;top:352px;color:#c4c4c4;font-size:12.5px;">Y</div>
<div style="left:2295px;top:350px;width:120px;height:18px;background:#2a2a2a;border:1px solid #212121;border-radius:3px"></div>
<div class="t" style="left:2298px;top:352px;color:#c4c4c4;font-size:12.5px;">0</div>
<div class="t" style="left:2421px;top:352px;color:#c4c4c4;font-size:12.5px;">Z</div>
<div style="left:2435px;top:350px;width:120px;height:18px;background:#2a2a2a;border:1px solid #212121;border-radius:3px"></div>
<div class="t" style="left:2438px;top:352px;color:#c4c4c4;font-size:12.5px;">0</div>
<div class="t" style="left:1853px;top:372px;color:#c4c4c4;font-size:12.5px;">Radius</div>
<div style="left:2141px;top:370px;width:414px;height:18px;background:#2a2a2a;border:1px solid #212121;border-radius:3px"></div>
<div class="t" style="left:2144px;top:372px;color:#c4c4c4;font-size:12.5px;">0.5</div>
<div class="t" style="left:1853px;top:392px;color:#c4c4c4;font-size:12.5px;">Height</div>
<div style="left:2141px;top:390px;width:414px;height:18px;background:#2a2a2a;border:1px solid #212121;border-radius:3px"></div>
<div class="t" style="left:2144px;top:392px;color:#c4c4c4;font-size:12.5px;">2</div>
<svg style="left:1841px;top:415px" width="9" height="10"><path d="M1 0.5 V9.5 L8.5 5z" fill="#7b7b7b"/></svg>
<div class="t" style="left:1853px;top:412px;color:#c4c4c4;font-size:12.5px;">Layer Overrides</div>
<div style="left:1834px;top:435px;width:726px;height:1px;background:#1f1f1f;"></div>
<div style="left:1834px;top:436px;width:726px;height:20px;background:#3e3e3e;"></div>
<div style="left:1834px;top:456px;width:726px;height:1px;background:#303030;"></div>
<svg style="left:1839px;top:443px" width="10" height="9"><path d="M0.5 1 H9 L4.75 8z" fill="#7b7b7b"/></svg>
<svg style="left:1855px;top:439px" width="14" height="14" viewBox="0 0 14 14"><path d="M2 0.5 H9 L12 3.5 V13.5 H2z" fill="#e8e8e8"/><path d="M5.5 3 L4.5 11 M8.5 3 L7.5 11 M3 5.5 H10.5 M2.5 8.5 H10" stroke="#2c8a2c" stroke-width="1.2"/></svg>
<div style="left:1874px;top:439px;width:14px;height:14px;background:#2a2a2a;border:1px solid #212121;border-radius:2px"></div>
<svg style="left:1874px;top:439px" width="14" height="14" viewBox="0 0 14 14"><path d="M3 7.2 L5.8 10 L11 4.2" fill="none" stroke="#d6d6d6" stroke-width="1.6"/></svg>
<div class="t" style="left:1894px;top:439px;color:#d2d2d2;font-size:12.5px;font-weight:bold">Third Character Controller (Script)</div>
<svg style="left:2500px;top:440px" width="40" height="12" viewBox="0 0 40 12"><circle cx="6" cy="6" r="5.5" fill="#c4c4c4"/><path d="M4.2 4.5 a1.8 1.8 0 1 1 2.6 1.6 Q6 6.6 6 7.5" fill="none" stroke="#3e3e3e" stroke-width="1.3"/><circle cx="6" cy="9.3" r="0.8" fill="#3e3e3e"/><path d="M21 3 H32 M21 9 H32 M28 0.5 V5.5 M24.5 6.5 V11.5" stroke="#c4c4c4" stroke-width="1.3"/></svg>
<svg style="left:2545px;top:440px" width="4" height="12"><rect x="0.6" y="0.8" width="2.3" height="2.3" rx="0.6" fill="#c4c4c4"/><rect x="0.6" y="4.8" width="2.3" height="2.3" rx="0.6" fill="#c4c4c4"/><rect x="0.6" y="8.8" width="2.3" height="2.3" rx="0.6" fill="#c4c4c4"/></svg>
<div style="left:1834px;top:457px;width:726px;height:327px;background:#383838;"></div>
<div class="t" style="left:1853px;top:462px;color:#848484;font-size:12.5px;">Script</div>
<div style="left:2141px;top:460px;width:414px;height:18px;background:#2f2f2f;border:1px solid #262626;border-radius:3px"></div>
<svg style="left:2145px;top:463px" width="10" height="12" viewBox="0 0 10 12"><path d="M0.5 0.5 H7 L9.5 3 V11.5 H0.5z" fill="#8a8a8a"/><path d="M3.5 3 L3 9 M6 3 L5.5 9 M2 5 H8 M2 7.5 H7.5" stroke="#4f7a4f" stroke-width="0.9"/></svg>
<div class="t" style="left:2158px;top:462px;color:#8f8f8f;font-size:12.5px;">ThirdCharacterController</div>
<svg style="left:2540px;top:463px" width="12" height="12"><circle cx="6" cy="6" r="4.5" fill="none" stroke="#8a8a8a" stroke-width="1.1"/><circle cx="6" cy="6" r="2" fill="#8a8a8a"/></svg>
<div class="t" style="left:1853px;top:482px;color:#c4c4c4;font-size:12.5px;">Move Speed</div>
<div style="left:2141px;top:480px;width:414px;height:18px;background:#2a2a2a;border:1px solid #212121;border-radius:3px"></div>
<div class="t" style="left:2144px;top:482px;color:#c4c4c4;font-size:12.5px;">5</div>
<div class="t" style="left:1853px;top:502px;color:#c4c4c4;font-size:12.5px;">Jump Speed</div>
<div style="left:2141px;top:500px;width:414px;height:18px;background:#2a2a2a;border:1px solid #212121;border-radius:3px"></div>
<div class="t" style="left:2144px;top:502px;color:#c4c4c4;font-size:12.5px;">2</div>
<div class="t" style="left:1853px;top:522px;color:#c4c4c4;font-size:12.5px;">Turn Speed</div>
<div style="left:2141px;top:520px;width:414px;height:18px;background:#2a2a2a;border:1px solid #212121;border-radius:3px"></div>
<div class="t" style="left:2144px;top:522px;color:#c4c4c4;font-size:12.5px;">10</div>
<div class="t" style="left:1853px;top:542px;color:#c4c4c4;font-size:12.5px;">Gravity</div>
<div style="left:2141px;top:540px;width:414px;height:18px;background:#2a2a2a;border:1px solid #212121;border-radius:3px"></div>
<div class="t" style="left:2144px;top:542px;color:#c4c4c4;font-size:12.5px;">10</div>
<div class="t" style="left:1853px;top:572px;color:#d2d2d2;font-size:12.5px;font-weight:bold">PickSettings</div>
<div class="t" style="left:1853px;top:590px;color:#c4c4c4;font-size:12.5px;">Pick Mode</div>
<div style="left:2141px;top:588px;width:414px;height:18px;background:#515151;border:1px solid #303030;border-radius:3px"></div>
<div class="t" style="left:2145px;top:589px;color:#d2d2d2;font-size:12.5px;">Ray Cast</div>
<svg style="left:2541px;top:594px" width="10" height="7"><path d="M0.5 0.5 H9.5 L5 5.5z" fill="#c4c4c4"/></svg>
<div class="t" style="left:1853px;top:610px;color:#c4c4c4;font-size:12.5px;">Cursor Lock</div>
<div style="left:2141px;top:608px;width:414px;height:18px;background:#515151;border:1px solid #303030;border-radius:3px"></div>
<div class="t" style="left:2145px;top:609px;color:#d2d2d2;font-size:12.5px;">None</div>
<svg style="left:2541px;top:614px" width="10" height="7"><path d="M0.5 0.5 H9.5 L5 5.5z" fill="#c4c4c4"/></svg>
<div class="t" style="left:1853px;top:628px;color:#c4c4c4;font-size:12.5px;">Use Draw Ray</div>
<div style="left:2141px;top:629px;width:14px;height:14px;background:#2a2a2a;border:1px solid #212121;border-radius:2px"></div>
<svg style="left:2141px;top:629px" width="14" height="14" viewBox="0 0 14 14"><path d="M3 7.2 L5.8 10 L11 4.2" fill="none" stroke="#d6d6d6" stroke-width="1.6"/></svg>
<div class="t" style="left:1853px;top:649px;color:#c4c4c4;font-size:12.5px;">Max Distance</div>
<div style="left:2141px;top:647px;width:414px;height:18px;background:#2a2a2a;border:1px solid #212121;border-radius:3px"></div>
<div class="t" style="left:2144px;top:649px;color:#c4c4c4;font-size:12.5px;">5</div>
<div class="t" style="left:1853px;top:669px;color:#c4c4c4;font-size:12.5px;">Layer Mask</div>
<div style="left:2141px;top:667px;width:414px;height:18px;background:#515151;border:1px solid #303030;border-radius:3px"></div>
<div class="t" style="left:2145px;top:668px;color:#d2d2d2;font-size:12.5px;">Item</div>
<svg style="left:2541px;top:673px" width="10" height="7"><path d="M0.5 0.5 H9.5 L5 5.5z" fill="#c4c4c4"/></svg>
<div class="t" style="left:1853px;top:689px;color:#c4c4c4;font-size:12.5px;">Items Rotate Speed</div>
<div style="left:2141px;top:687px;width:414px;height:18px;background:#2a2a2a;border:1px solid #212121;border-radius:3px"></div>
<div class="t" style="left:2144px;top:689px;color:#c4c4c4;font-size:12.5px;">120</div>
<div class="t" style="left:1853px;top:709px;color:#c4c4c4;font-size:12.5px;">Item Root</div>
<div style="left:2141px;top:707px;width:414px;height:18px;background:#2a2a2a;border:1px solid #212121;border-radius:3px"></div>
<svg style="left:2144px;top:710px" width="12" height="12" viewBox="0 0 12 12"><path d="M6 1.5 V6" stroke="#9ee048" stroke-width="1.8"/><path d="M6 6.3 L2.3 9" stroke="#5fc2f0" stroke-width="1.8"/><path d="M6 6.3 L9.7 9" stroke="#f0643c" stroke-width="1.8"/></svg>
<div class="t" style="left:2158px;top:709px;color:#c4c4c4;font-size:12.5px;">None (Transform)</div>
<div style="left:2536px;top:708px;width:18px;height:16px;background:#333333;"></div>
<svg style="left:2540px;top:710px" width="12" height="12"><circle cx="6" cy="6" r="4.5" fill="none" stroke="#c4c4c4" stroke-width="1.1"/><circle cx="6" cy="6" r="2" fill="#c4c4c4"/></svg>
<div style="left:1834px;top:733px;width:726px;height:1px;background:#1f1f1f;"></div>
<div style="left:2083px;top:743px;width:228px;height:22px;background:#585858;border:1px solid #303030;border-radius:3px"></div>
<div class="t" style="left:2152px;top:747px;color:#d2d2d2;font-size:12.5px;">Add Component</div>
<div style="left:1834px;top:784px;width:726px;height:586px;background:#383838;"></div>
<div style="left:1830px;top:431px;width:730px;height:353px;background:transparent;border:4px solid #80d4fa;border-radius:4px;box-shadow:0 0 0 1px rgba(40,30,25,0.7), inset 0 0 0 1px rgba(40,30,25,0.7)"></div>
<div class="t" style="left:2239px;top:1283px;color:#8c8c8c;font-size:21px;line-height:16px;letter-spacing:0.3px">激活 Windows</div>
<div class="t" style="left:2239px;top:1307px;color:#8c8c8c;font-size:15.6px;">转到“设置”以激活 Windows。</div>
<div style="left:0px;top:930px;width:1832px;height:2px;background:#191919;"></div>
<div style="left:0px;top:932px;width:1832px;height:19px;background:#282828;"></div>
<div style="left:0px;top:932px;width:80px;height:19px;background:#3c3c3c;border-radius:3px 3px 0 0"></div>
<svg style="left:6px;top:936px" width="14" height="12" viewBox="0 0 14 12"><path d="M0.5 1 H5 L6.5 2.5 H12.5 V11 H0.5z" fill="#c4c4c4"/></svg>
<div class="t" style="left:23px;top:935px;color:#c4c4c4;font-size:12.5px;">Project</div>
<svg style="left:88px;top:936px" width="13" height="13" viewBox="0 0 13 13"><circle cx="6.5" cy="6.5" r="6" fill="#c4c4c4"/><path d="M6.5 2.5 V6.8 H9.5" fill="none" stroke="#282828" stroke-width="1.4"/></svg>
<div class="t" style="left:105px;top:935px;color:#c4c4c4;font-size:12.5px;">Animation</div>
<svg style="left:186px;top:936px" width="13" height="12" viewBox="0 0 13 12"><rect x="1" y="1" width="11" height="10" fill="none" stroke="#c4c4c4" stroke-width="1.3"/><path d="M3.5 1 V11 M9.5 1 V11 M1 4 H3.5 M1 8 H3.5 M9.5 4 H12 M9.5 8 H12" stroke="#c4c4c4" stroke-width="1.2"/></svg>
<div class="t" style="left:203px;top:935px;color:#c4c4c4;font-size:12.5px;">Timeline</div>
<svg style="left:277px;top:935px" width="12" height="13" viewBox="0 0 12 13"><rect x="1" y="1" width="10" height="11" fill="none" stroke="#c4c4c4" stroke-width="1.3"/><path d="M3 4 H9 M3 6.5 H9 M3 9 H9" stroke="#c4c4c4" stroke-width="1.2"/></svg>
<div class="t" style="left:293px;top:935px;color:#c4c4c4;font-size:12.5px;">Console</div>
<svg style="left:366px;top:935px" width="12" height="12" viewBox="0 0 12 12"><path d="M1 2 L5 6 L1 9 M5 6 H11 M8.5 3.5 L11 6 L8.5 8.5" fill="none" stroke="#c4c4c4" stroke-width="1.3"/></svg>
<div class="t" style="left:381px;top:935px;color:#c4c4c4;font-size:12.5px;">Animator</div>
<svg style="left:1796px;top:934px" width="12" height="13" viewBox="0 0 12 13"><rect x="2" y="7" width="8" height="4.5" rx="0.8" fill="none" stroke="#c4c4c4" stroke-width="1.2"/><path d="M8.2 7 V4 a2.6 2.6 0 0 0 -5.2 0" fill="none" stroke="#c4c4c4" stroke-width="1.2"/></svg>
<svg style="left:1816px;top:935px" width="4" height="12"><rect x="0.6" y="0.8" width="2.3" height="2.3" rx="0.6" fill="#c4c4c4"/><rect x="0.6" y="4.8" width="2.3" height="2.3" rx="0.6" fill="#c4c4c4"/><rect x="0.6" y="8.8" width="2.3" height="2.3" rx="0.6" fill="#c4c4c4"/></svg>
<div style="left:0px;top:951px;width:1832px;height:20px;background:#3c3c3c;"></div>
<div style="left:0px;top:971px;width:1832px;height:1px;background:#232323;"></div>
<svg style="left:5px;top:954px" width="30" height="14" viewBox="0 0 30 14"><path d="M7 1 V13 M1 7 H13" stroke="#c4c4c4" stroke-width="2"/><path d="M17 5 h8 l-4 4.5z" fill="#c4c4c4"/></svg>
<div style="left:1366px;top:953px;width:298px;height:17px;background:#2a2a2a;border:1px solid #212121;border-radius:3px 0 0 3px"></div>
<svg style="left:1369px;top:956px" width="10" height="10" viewBox="0 0 10 10"><circle cx="4" cy="4" r="2.5" fill="none" stroke="#c4c4c4" stroke-width="1.3"/><path d="M5.8 5.8 L8.5 8.5" stroke="#c4c4c4" stroke-width="1.6"/></svg>
<div style="left:1664px;top:953px;width:24px;height:17px;background:#2a2a2a;border:1px solid #212121;border-radius:0 3px 3px 0"></div>
<svg style="left:1668px;top:955px" width="14" height="14" viewBox="0 0 14 14"><rect x="4.5" y="1.5" width="8" height="8" fill="none" stroke="#c4c4c4" stroke-width="1"/><rect x="1.5" y="8.5" width="4" height="4" fill="#2a2a2a" stroke="#c4c4c4" stroke-width="1"/><path d="M5.5 8.5 L10.5 3.5 M7.5 3.5 H10.5 V6.5" fill="none" stroke="#c4c4c4" stroke-width="1"/></svg>
<div style="left:1686px;top:951px;width:1px;height:20px;background:#262626;"></div>
<div style="left:1711px;top:951px;width:1px;height:20px;background:#262626;"></div>
<div style="left:1737px;top:951px;width:1px;height:20px;background:#262626;"></div>
<div style="left:1764px;top:951px;width:1px;height:20px;background:#262626;"></div>
<div style="left:1790px;top:951px;width:1px;height:20px;background:#262626;"></div>
<svg style="left:1691px;top:953px" width="15" height="15" viewBox="0 0 15 15"><rect x="4.5" y="0.5" width="5.5" height="5.5" fill="#c4c4c4"/><path d="M10 3.5 L14 10 H8z" fill="#c4c4c4"/><circle cx="4.5" cy="10" r="3.8" fill="#c4c4c4"/></svg>
<svg style="left:1717px;top:955px" width="14" height="14" viewBox="0 0 14 14"><path d="M7 1 H13 V7 L6.5 13.5 L0.5 7.5z" fill="#c4c4c4"/><circle cx="10.3" cy="3.8" r="1.2" fill="#3c3c3c"/></svg>
<svg style="left:1743px;top:953px" width="16" height="16" viewBox="0 0 16 16"><path d="M5 1 H11 L15 5 V11 L11 15 H5 L1 11 V5z" fill="#c4c4c4"/><rect x="7" y="3.5" width="2" height="6" fill="#3c3c3c"/><rect x="7" y="10.8" width="2" height="2" fill="#3c3c3c"/></svg>
<svg style="left:1770px;top:954px" width="14" height="14" viewBox="0 0 14 14"><path d="M7 0.5 L9 5 L13.5 5.2 L10 8.3 L11.2 13 L7 10.4 L2.8 13 L4 8.3 L0.5 5.2 L5 5z" fill="#8a8a8a"/></svg>
<svg style="left:1795px;top:955px" width="16" height="12" viewBox="0 0 16 12"><path d="M1 6 Q8 -1 15 6 Q8 13 1 6z" fill="none" stroke="#8a8a8a" stroke-width="1.3"/><circle cx="8" cy="6" r="2.3" fill="#8a8a8a"/></svg>
<div class="t" style="left:1812px;top:954px;color:#c4c4c4;font-size:12.5px;">22</div>
<div style="left:0px;top:972px;width:194px;height:398px;background:#383838;"></div>
<div style="left:194px;top:972px;width:13px;height:398px;background:#333333;"></div>
<div style="left:196px;top:990px;width:10px;height:177px;background:#5a5a5a;border-radius:5px"></div>
<svg style="left:196px;top:975px" width="10" height="8"><path d="M1 6 h8 l-4-4.5z" fill="#c4c4c4"/></svg>
<svg style="left:196px;top:1357px" width="10" height="8"><path d="M1 1.5 h8 l-4 4.5z" fill="#c4c4c4"/></svg>
<div style="left:207px;top:972px;width:1px;height:398px;background:#232323;"></div>
<div style="left:0px;top:1353px;width:194px;height:17px;background:#4d4d4d;"></div>
<svg style="left:31px;top:971px" width="13" height="13" viewBox="0 0 13 13"><circle cx="5.3" cy="5.3" r="4.2" fill="none" stroke="#c4c4c4" stroke-width="1.2"/><path d="M8.3 8.3 L12 12" stroke="#c4c4c4" stroke-width="1.4"/></svg>
<div class="t" style="left:48px;top:971px;color:#c4c4c4;font-size:12.5px;">All Materials</div>
<svg style="left:31px;top:987px" width="13" height="13" viewBox="0 0 13 13"><circle cx="5.3" cy="5.3" r="4.2" fill="none" stroke="#c4c4c4" stroke-width="1.2"/><path d="M8.3 8.3 L12 12" stroke="#c4c4c4" stroke-width="1.4"/></svg>
<div class="t" style="left:48px;top:987px;color:#c4c4c4;font-size:12.5px;">All Models</div>
<svg style="left:31px;top:1003px" width="13" height="13" viewBox="0 0 13 13"><circle cx="5.3" cy="5.3" r="4.2" fill="none" stroke="#c4c4c4" stroke-width="1.2"/><path d="M8.3 8.3 L12 12" stroke="#c4c4c4" stroke-width="1.4"/></svg>
<div class="t" style="left:48px;top:1003px;color:#c4c4c4;font-size:12.5px;">All Prefabs</div>
<svg style="left:4px;top:1038px" width="10" height="9"><path d="M0.5 1 H9 L4.75 8z" fill="#7b7b7b"/></svg>
<svg style="left:18px;top:1035px" width="16" height="12" viewBox="0 0 16 12"><path d="M0.8 0.8 H5.5 L7 2.3 H12.5 V4.5 H3.5 L0.8 11.2z" fill="none" stroke="#c4c4c4" stroke-width="1.3" stroke-linejoin="round"/><path d="M3.5 4.5 H15.5 L13 11.2 H0.8z" fill="#c4c4c4"/></svg>
<div class="t" style="left:34px;top:1034px;color:#d2d2d2;font-size:12.5px;font-weight:bold">Assets</div>
<svg style="left:18px;top:1054px" width="10" height="9"><path d="M0.5 1 H9 L4.75 8z" fill="#7b7b7b"/></svg>
<svg style="left:32px;top:1051px" width="16" height="12" viewBox="0 0 16 12"><path d="M0.8 0.8 H5.5 L7 2.3 H12.5 V4.5 H3.5 L0.8 11.2z" fill="none" stroke="#c4c4c4" stroke-width="1.3" stroke-linejoin="round"/><path d="M3.5 4.5 H15.5 L13 11.2 H0.8z" fill="#c4c4c4"/></svg>
<div class="t" style="left:48px;top:1050px;color:#c4c4c4;font-size:12.5px;">Resources</div>
<svg style="left:32px;top:1070px" width="10" height="9"><path d="M0.5 1 H9 L4.75 8z" fill="#7b7b7b"/></svg>
<svg style="left:46px;top:1067px" width="16" height="12" viewBox="0 0 16 12"><path d="M0.8 0.8 H5.5 L7 2.3 H12.5 V4.5 H3.5 L0.8 11.2z" fill="none" stroke="#c4c4c4" stroke-width="1.3" stroke-linejoin="round"/><path d="M3.5 4.5 H15.5 L13 11.2 H0.8z" fill="#c4c4c4"/></svg>
<div class="t" style="left:62px;top:1066px;color:#c4c4c4;font-size:12.5px;">FBX</div>
<svg style="left:46px;top:1085px" width="9" height="10"><path d="M1 0.5 V9.5 L8.5 5z" fill="#7b7b7b"/></svg>
<svg style="left:60px;top:1083px" width="16" height="12" viewBox="0 0 16 12"><path d="M0.5 0.5 H5.5 L7 2 H13.5 V11.5 H0.5z" fill="#c4c4c4"/></svg>
<div class="t" style="left:76px;top:1082px;color:#c4c4c4;font-size:12.5px;">Aris</div>
<svg style="left:46px;top:1102px" width="10" height="9"><path d="M0.5 1 H9 L4.75 8z" fill="#7b7b7b"/></svg>
<svg style="left:60px;top:1099px" width="16" height="12" viewBox="0 0 16 12"><path d="M0.8 0.8 H5.5 L7 2.3 H12.5 V4.5 H3.5 L0.8 11.2z" fill="none" stroke="#c4c4c4" stroke-width="1.3" stroke-linejoin="round"/><path d="M3.5 4.5 H15.5 L13 11.2 H0.8z" fill="#c4c4c4"/></svg>
<div class="t" style="left:76px;top:1098px;color:#c4c4c4;font-size:12.5px;">Midori</div>
<svg style="left:74px;top:1115px" width="16" height="12" viewBox="0 0 16 12"><path d="M0.5 0.5 H5.5 L7 2 H13.5 V11.5 H0.5z" fill="#c4c4c4"/></svg>
<div class="t" style="left:90px;top:1114px;color:#c4c4c4;font-size:12.5px;">Mats</div>
<svg style="left:46px;top:1134px" width="10" height="9"><path d="M0.5 1 H9 L4.75 8z" fill="#7b7b7b"/></svg>
<svg style="left:60px;top:1131px" width="16" height="12" viewBox="0 0 16 12"><path d="M0.8 0.8 H5.5 L7 2.3 H12.5 V4.5 H3.5 L0.8 11.2z" fill="none" stroke="#c4c4c4" stroke-width="1.3" stroke-linejoin="round"/><path d="M3.5 4.5 H15.5 L13 11.2 H0.8z" fill="#c4c4c4"/></svg>
<div class="t" style="left:76px;top:1130px;color:#c4c4c4;font-size:12.5px;">Momoi</div>
<svg style="left:74px;top:1147px" width="16" height="12" viewBox="0 0 16 12"><path d="M0.5 0.5 H5.5 L7 2 H13.5 V11.5 H0.5z" fill="#c4c4c4"/></svg>
<div class="t" style="left:90px;top:1146px;color:#c4c4c4;font-size:12.5px;">Mats</div>
<svg style="left:46px;top:1166px" width="10" height="9"><path d="M0.5 1 H9 L4.75 8z" fill="#7b7b7b"/></svg>
<svg style="left:60px;top:1163px" width="16" height="12" viewBox="0 0 16 12"><path d="M0.8 0.8 H5.5 L7 2.3 H12.5 V4.5 H3.5 L0.8 11.2z" fill="none" stroke="#c4c4c4" stroke-width="1.3" stroke-linejoin="round"/><path d="M3.5 4.5 H15.5 L13 11.2 H0.8z" fill="#c4c4c4"/></svg>
<div class="t" style="left:76px;top:1162px;color:#c4c4c4;font-size:12.5px;">Yuzu</div>
<svg style="left:74px;top:1179px" width="16" height="12" viewBox="0 0 16 12"><path d="M0.5 0.5 H5.5 L7 2 H13.5 V11.5 H0.5z" fill="#c4c4c4"/></svg>
<div class="t" style="left:90px;top:1178px;color:#c4c4c4;font-size:12.5px;">Mats</div>
<svg style="left:46px;top:1195px" width="16" height="12" viewBox="0 0 16 12"><path d="M0.5 0.5 H5.5 L7 2 H13.5 V11.5 H0.5z" fill="#c4c4c4"/></svg>
<div class="t" style="left:62px;top:1194px;color:#c4c4c4;font-size:12.5px;">SimpleURPToon</div>
<svg style="left:18px;top:1214px" width="10" height="9"><path d="M0.5 1 H9 L4.75 8z" fill="#7b7b7b"/></svg>
<svg style="left:32px;top:1211px" width="16" height="12" viewBox="0 0 16 12"><path d="M0.8 0.8 H5.5 L7 2.3 H12.5 V4.5 H3.5 L0.8 11.2z" fill="none" stroke="#c4c4c4" stroke-width="1.3" stroke-linejoin="round"/><path d="M3.5 4.5 H15.5 L13 11.2 H0.8z" fill="#c4c4c4"/></svg>
<div class="t" style="left:48px;top:1210px;color:#c4c4c4;font-size:12.5px;">Samples</div>
<svg style="left:32px;top:1229px" width="9" height="10"><path d="M1 0.5 V9.5 L8.5 5z" fill="#7b7b7b"/></svg>
<svg style="left:46px;top:1227px" width="16" height="12" viewBox="0 0 16 12"><path d="M0.5 0.5 H5.5 L7 2 H13.5 V11.5 H0.5z" fill="#c4c4c4"/></svg>
<div class="t" style="left:62px;top:1226px;color:#c4c4c4;font-size:12.5px;">Cinemachine</div>
<svg style="left:32px;top:1246px" width="10" height="9"><path d="M0.5 1 H9 L4.75 8z" fill="#7b7b7b"/></svg>
<svg style="left:46px;top:1243px" width="16" height="12" viewBox="0 0 16 12"><path d="M0.8 0.8 H5.5 L7 2.3 H12.5 V4.5 H3.5 L0.8 11.2z" fill="none" stroke="#c4c4c4" stroke-width="1.3" stroke-linejoin="round"/><path d="M3.5 4.5 H15.5 L13 11.2 H0.8z" fill="#c4c4c4"/></svg>
<div class="t" style="left:62px;top:1242px;color:#c4c4c4;font-size:12.5px;">Input System</div>
<svg style="left:46px;top:1262px" width="10" height="9"><path d="M0.5 1 H9 L4.75 8z" fill="#7b7b7b"/></svg>
<svg style="left:60px;top:1259px" width="16" height="12" viewBox="0 0 16 12"><path d="M0.8 0.8 H5.5 L7 2.3 H12.5 V4.5 H3.5 L0.8 11.2z" fill="none" stroke="#c4c4c4" stroke-width="1.3" stroke-linejoin="round"/><path d="M3.5 4.5 H15.5 L13 11.2 H0.8z" fill="#c4c4c4"/></svg>
<div class="t" style="left:76px;top:1258px;color:#c4c4c4;font-size:12.5px;">1.14.2</div>
<svg style="left:74px;top:1275px" width="16" height="12" viewBox="0 0 16 12"><path d="M0.5 0.5 H5.5 L7 2 H13.5 V11.5 H0.5z" fill="#c4c4c4"/></svg>
<div class="t" style="left:90px;top:1274px;color:#c4c4c4;font-size:12.5px;">On-Screen Contro</div>
<svg style="left:32px;top:1291px" width="16" height="12" viewBox="0 0 16 12"><path d="M0.5 0.5 H5.5 L7 2 H13.5 V11.5 H0.5z" fill="#c4c4c4"/></svg>
<div class="t" style="left:48px;top:1290px;color:#c4c4c4;font-size:12.5px;">Scenes</div>
<svg style="left:18px;top:1310px" width="10" height="9"><path d="M0.5 1 H9 L4.75 8z" fill="#7b7b7b"/></svg>
<svg style="left:32px;top:1307px" width="16" height="12" viewBox="0 0 16 12"><path d="M0.8 0.8 H5.5 L7 2.3 H12.5 V4.5 H3.5 L0.8 11.2z" fill="none" stroke="#c4c4c4" stroke-width="1.3" stroke-linejoin="round"/><path d="M3.5 4.5 H15.5 L13 11.2 H0.8z" fill="#c4c4c4"/></svg>
<div class="t" style="left:48px;top:1306px;color:#c4c4c4;font-size:12.5px;">Scripts</div>
<svg style="left:46px;top:1323px" width="16" height="12" viewBox="0 0 16 12"><path d="M0.5 0.5 H5.5 L7 2 H13.5 V11.5 H0.5z" fill="#c4c4c4"/></svg>
<div class="t" style="left:62px;top:1322px;color:#c4c4c4;font-size:12.5px;">StudyCase1</div>
<svg style="left:46px;top:1339px" width="16" height="12" viewBox="0 0 16 12"><path d="M0.5 0.5 H5.5 L7 2 H13.5 V11.5 H0.5z" fill="#c4c4c4"/></svg>
<div class="t" style="left:62px;top:1338px;color:#c4c4c4;font-size:12.5px;">StudyCase2</div>
<svg style="left:46px;top:1355px" width="16" height="12" viewBox="0 0 16 12"><path d="M0.5 0.5 H5.5 L7 2 H13.5 V11.5 H0.5z" fill="#c4c4c4"/></svg>
<div class="t" style="left:62px;top:1354px;color:#c4c4c4;font-size:12.5px;">StudyCase3</div>
<div style="left:208px;top:972px;width:1624px;height:398px;background:#333333;"></div>
<div style="left:208px;top:972px;width:1624px;height:21px;background:#3f3f3f;"></div>
<div class="t" style="left:212px;top:974px;color:#b8b8b8;font-size:12.5px;">Assets</div>
<svg style="left:254px;top:977px" width="8" height="10"><path d="M1.5 1 L6 5 L1.5 9" fill="none" stroke="#a8a8a8" stroke-width="1.2"/></svg>
<div class="t" style="left:267px;top:974px;color:#b8b8b8;font-size:12.5px;">Scripts</div>
<svg style="left:311px;top:977px" width="8" height="10"><path d="M1.5 1 L6 5 L1.5 9" fill="none" stroke="#a8a8a8" stroke-width="1.2"/></svg>
<div class="t" style="left:324px;top:974px;color:#d6d6d6;font-size:12.5px;font-weight:bold">StudyCase3</div>
<svg style="left:226px;top:994px" width="12" height="14" viewBox="0 0 12 14"><path d="M0.5 0.5 H8.5 L11.5 3.5 V13.5 H0.5z" fill="#ececec"/><path d="M4.5 3 L3.5 11.5 M7.5 3 L6.5 11.5 M2 5.8 H9.8 M1.8 8.8 H9.5" stroke="#2a8a2a" stroke-width="1.2"/></svg>
<div class="t" style="left:242px;top:994px;color:#c4c4c4;font-size:12.5px;">Item</div>
<svg style="left:226px;top:1010px" width="12" height="14" viewBox="0 0 12 14"><path d="M0.5 0.5 H8.5 L11.5 3.5 V13.5 H0.5z" fill="#ececec"/><path d="M4.5 3 L3.5 11.5 M7.5 3 L6.5 11.5 M2 5.8 H9.8 M1.8 8.8 H9.5" stroke="#2a8a2a" stroke-width="1.2"/></svg>
<div class="t" style="left:242px;top:1010px;color:#c4c4c4;font-size:12.5px;">ThirdCharacterController</div>
<div style="left:208px;top:1349px;width:1624px;height:21px;background:#424242;"></div>
<div style="left:1766px;top:1359px;width:50px;height:1px;background:#777777;"></div>
<svg style="left:1760px;top:1354px" width="12" height="12"><circle cx="6" cy="6" r="4.5" fill="#999999"/></svg>
<div style="left:1832px;top:930px;width:2px;height:440px;background:#191919;"></div>
<div style="left:200px;top:966px;width:225px;height:79px;background:transparent;border:4px solid #80d4fa;border-radius:4px;box-shadow:0 0 0 1px rgba(40,30,25,0.7), inset 0 0 0 1px rgba(40,30,25,0.7)"></div>
<div style="left:0px;top:1370px;width:2560px;height:22px;background:#191919;"></div>
<svg style="left:2458px;top:1373px" width="100" height="16" viewBox="0 0 100 16"><g stroke="#c4c4c4" fill="none" stroke-width="1.3"><path d="M4 5 H12 V10 a4 4 0 0 1-8 0z" fill="#c4c4c4"/><path d="M2 2 L14 14"/><path d="M1 8 H4 M12 8 H15"/></g><g transform="translate(26 0)"><ellipse cx="8" cy="4" rx="6" ry="2.5" fill="#c4c4c4"/><path d="M2 7 Q8 11 14 7 M2 10.5 Q8 14.5 14 10.5" stroke="#c4c4c4" stroke-width="1.6" fill="none"/><path d="M3 2 L14 14" stroke="#191919" stroke-width="1.5"/></g><g transform="translate(52 0)"><circle cx="8" cy="8" r="5.5" fill="none" stroke="#c4c4c4" stroke-width="1.3"/><circle cx="8" cy="8" r="2.3" fill="#c4c4c4"/><path d="M2 2 L14 14" stroke="#c4c4c4" stroke-width="1.3"/></g><g transform="translate(78 0)"><circle cx="8" cy="8" r="6" fill="none" stroke="#c4c4c4" stroke-width="1.3"/><path d="M5 8 L7.3 10.3 L11 6" fill="none" stroke="#c4c4c4" stroke-width="1.3"/></g></svg>
</body></html>
